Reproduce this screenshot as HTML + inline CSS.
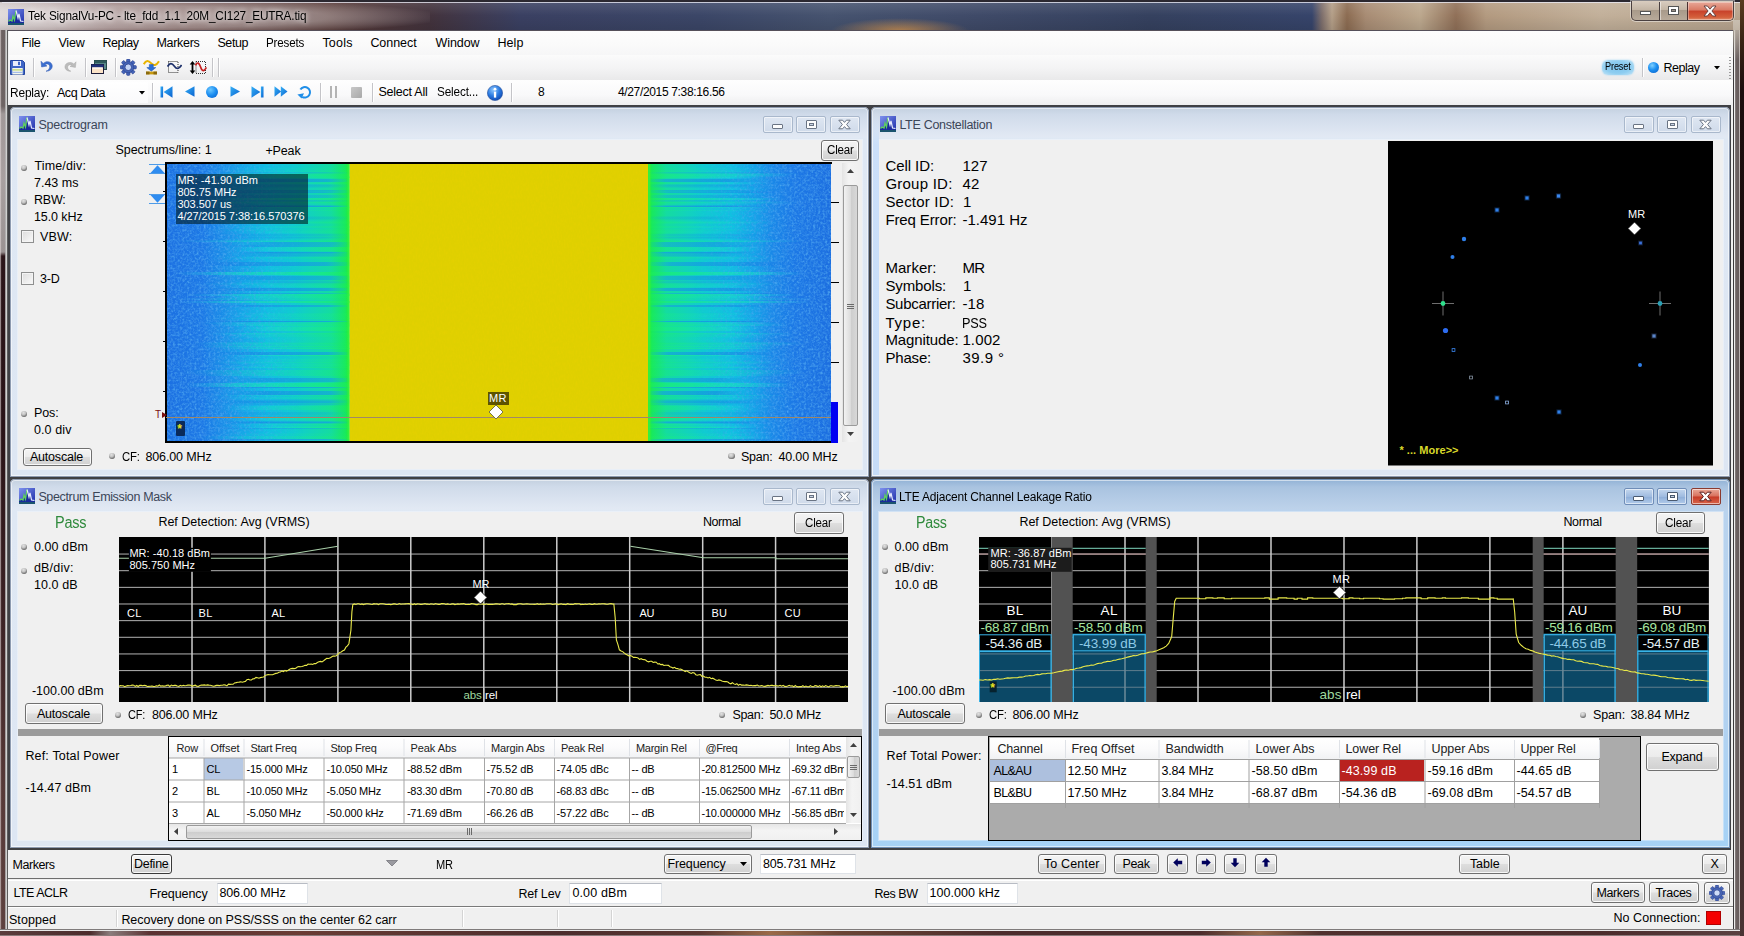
<!DOCTYPE html>
<html lang="en"><head><meta charset="utf-8"><title>Tek SignalVu-PC</title>
<style>

html,body{margin:0;padding:0}
body{width:1744px;height:936px;overflow:hidden;position:relative;background:#5c4848;font-family:"Liberation Sans",sans-serif;font-size:12px;color:#000}
div,span,svg{box-sizing:border-box}
.t{position:absolute;white-space:pre}
.a{position:absolute}
.btn{position:absolute;border:1px solid #707070;border-radius:3px;background:linear-gradient(#f4f4f4 0%,#ececec 48%,#dedede 52%,#d0d0d0 100%);box-shadow:inset 0 0 0 1px rgba(255,255,255,.85)}
.fld{position:absolute;background:#fff;border:1px solid #dfe3e8;border-top-color:#b8bcc4}
.knob{position:absolute;width:6.4px;height:6.4px;border-radius:50%;background:radial-gradient(circle at 42% 30%,#e2e2e2 0%,#c2c2c2 38%,#565656 82%,#2c2c2c 100%)}
.chk{position:absolute;width:13px;height:13px;border:1px solid #8e8f8f;background:linear-gradient(135deg,#dcdcdc,#fafafa);box-shadow:inset 0 0 0 1px #f4f4f4}
.pb{position:absolute;height:16.5px;border:1px solid #a9b8cc;border-radius:2px;background:linear-gradient(#dfe7f2,#cfdaea);box-shadow:inset 0 0 0 1px rgba(255,255,255,.55)}
.sep{position:absolute;width:1px;background:#c4c4c8;box-shadow:1px 0 0 #fff}
.glow{text-shadow:0 0 5px rgba(255,255,255,.9),0 0 8px rgba(255,255,255,.7)}

</style></head>
<body>
<div class="a" style="left:0;top:0;width:1744px;height:31px;background:linear-gradient(90deg,#cfc6c6 0px,#b9a8a8 50px,#8a6d6c 110px,#6b4a47 180px,#573a38 330px,#43333d 430px,#3a4062 520px,#3b4667 700px,#46536f 830px,#404b69 960px,#35415f 1150px,#36446a 1312px,#7e6f6c 1322px,#b49f88 1332px,#8c6c52 1347px,#a88c74 1366px,#bca88e 1420px,#907058 1456px,#b39a80 1486px,#c2b09a 1600px,#b7a48e 1744px)"></div>
<div class="a" style="left:830px;top:18px;width:140px;height:13px;background:radial-gradient(ellipse at 50% 100%,rgba(214,150,80,.85),rgba(214,150,80,0) 70%)"></div>
<div class="a" style="left:0;top:0;width:1744px;height:2px;background:#2b2830"></div>
<div class="a" style="left:2px;top:2px;width:1738px;height:1px;background:rgba(235,235,245,.8)"></div>
<div class="a" style="left:0;top:3px;width:1744px;height:28px;background:linear-gradient(rgba(255,255,255,.10),rgba(255,255,255,0) 45%,rgba(0,0,0,.10))"></div>
<div class="a" style="left:-40px;top:0px;width:470px;height:34px;background:radial-gradient(ellipse at 40% 50%,rgba(255,255,255,.50) 0%,rgba(255,255,255,.34) 45%,rgba(255,255,255,0) 75%)"></div>
<div class="a" style="left:1740px;top:0;width:4px;height:936px;background:linear-gradient(#5a3c20 0,#3a2414 40px,#1c0e0e 90px,#1a0c0c 50%,#3a2626 80%,#4a3434 100%)"></div>
<div class="a" style="left:0;top:30px;width:8px;height:906px;background:linear-gradient(#6c6262 0px,#6e6464 76px,#a09898 84px,#a8a0a0 150px,#9a9292 222px,#2c161a 226px,#2a1418 400px,#3e2426 600px,#573a38 760px,#5e4240 906px)"></div>
<div class="a" style="left:0;top:30px;width:8px;height:906px;background:linear-gradient(90deg,rgba(225,215,215,.85) 0,rgba(225,215,215,0) 1.6px,rgba(0,0,0,0) 5px,#b4b4b4 5.6px,#d4d4d4 6.6px,#5c5c5c 7.2px,#5c5c5c 8px)"></div>
<div class="a" style="left:1731px;top:30px;width:3px;height:899px;background:#fdfdfd"></div>
<div class="a" style="left:1733px;top:30px;width:7px;height:902px;background:linear-gradient(90deg,#3c3a3c 0,#3c3a3c 1px,#f0f0f0 1.4px,#e0e0e0 2px,#6e6464 2.6px,#665c5c 6.2px,#d8d0d0 6.6px,#d8d0d0 7px)"></div>
<div class="a" style="left:1733px;top:20px;width:7px;height:40px;background:linear-gradient(rgba(200,190,176,1),rgba(200,190,176,0))"></div>
<div class="a" style="left:0;top:929px;width:1740px;height:7px;background:linear-gradient(#4a4444 0,#e8e8e8 1.5px,#665252 2.5px,#5e4a4a 6px,#b8aaaa 7px)"></div>
<div class="a" style="left:0;top:931px;width:1740px;height:4px;background:linear-gradient(90deg,#5a3c3c 0px,#4c2c2c 90px,#8a7c7c 110px,#5a3232 150px,#6a3c34 300px,#4c2c2c 560px,#5a3630 700px,#9a6a48 770px,#6a4434 840px,#4c2c2c 1000px,#4c2c2c 1200px,#94684a 1260px,#50302e 1320px,#4c2c2c 1600px,#5a4040 1740px)"></div>
<svg class="a" style="left:8px;top:9px" width="16" height="16" viewBox="0 0 16 16"><defs><linearGradient id="ig1" x1="0" y1="0" x2="1" y2="1"><stop offset="0" stop-color="#7f92ee"/><stop offset="1" stop-color="#1b2ba8"/></linearGradient></defs><rect x="0" y="0" width="16" height="16" fill="url(#ig1)"/><path d="M0 16 L0 12 L2 11 L4 12 L5 7 L6.5 11 L8 1 L10 9 L11 5 L12.5 12 L16 12.5 L16 16Z" fill="#1a2a9c"/><path d="M0.5 12.5 L2 11 L4 12 L5 7 L6.5 11 L8 1.5" fill="none" stroke="#5fd060" stroke-width="1.3"/><path d="M8 1.5 L10 9 L11 5 L12.5 12 L15.5 12.5" fill="none" stroke="#e8ecff" stroke-width="1.2"/><path d="M0 15 L16 15" stroke="#1e7a46" stroke-width="1.5" opacity=".7"/></svg>
<span class="t glow" style="left:28.4px;top:8px;font-size:12.5px;line-height:16px;letter-spacing:-0.186px;transform:scaleX(0.942);transform-origin:0 50%;">Tek SignalVu-PC - lte_fdd_1.1_20M_CI127_EUTRA.tiq</span>
<div class="a" style="left:1631px;top:1px;width:103px;height:20px;border:1px solid #4a4040;border-top:none;border-radius:0 0 5px 5px;background:linear-gradient(#d9cdc0 0%,#c4b6a6 45%,#a89a8a 50%,#b8aa9a 100%);box-shadow:0 0 0 1px rgba(255,255,255,.45)"></div>
<div class="a" style="left:1659px;top:2px;width:1px;height:18px;background:#4a4040;box-shadow:1px 0 0 rgba(255,255,255,.5)"></div>
<div class="a" style="left:1687px;top:2px;width:46px;height:18px;border-left:1px solid #4a3030;border-radius:0 0 4px 0;background:linear-gradient(#e8a898 0%,#d97a64 45%,#c8412a 50%,#d4603c 85%,#e09070 100%);box-shadow:inset 0 0 0 1px rgba(255,255,255,.35)"></div>
<div class="a" style="left:1640px;top:11px;width:11px;height:4px;background:#fff;border:1px solid #555"></div>
<div class="a" style="left:1668px;top:6px;width:11px;height:9px;background:#fff;border:1px solid #555"></div>
<div class="a" style="left:1671px;top:9px;width:5px;height:3px;background:#9a8f86;border:1px solid #555"></div>
<svg class="a" style="left:1703px;top:5px" width="14" height="12" viewBox="0 0 14 12"><path d="M1 1h3.4L7 4.2 9.6 1H13L8.9 6 13 11H9.6L7 7.8 4.4 11H1L5.1 6Z" fill="#fff" stroke="#5a3a3a" stroke-width=".9"/></svg>
<div class="a" style="left:8px;top:30px;width:1725px;height:899px;background:#f0f0f0"></div>
<div class="a" style="left:8px;top:30px;width:1725px;height:1px;background:#55505a"></div>
<div class="a" style="left:9px;top:31px;width:1724px;height:24px;background:linear-gradient(#fdfdfd,#fafafa 60%,#f6f6f7)"></div>
<div class="a" style="left:9px;top:55px;width:1724px;height:25px;background:linear-gradient(#fbfbfb,#f3f3f4 55%,#e9e9ea)"></div>
<div class="a" style="left:9px;top:80px;width:1724px;height:25px;background:linear-gradient(#fefefe,#f9f9fa 60%,#eeeeef)"></div>
<span class="t" style="left:21.4px;top:35px;font-size:12.5px;line-height:16px;letter-spacing:-0.239px;">File</span>
<span class="t" style="left:58.4px;top:35px;font-size:12.5px;line-height:16px;letter-spacing:-0.169px;">View</span>
<span class="t" style="left:102.4px;top:35px;font-size:12.5px;line-height:16px;letter-spacing:-0.454px;">Replay</span>
<span class="t" style="left:156.4px;top:35px;font-size:12.5px;line-height:16px;letter-spacing:-0.279px;">Markers</span>
<span class="t" style="left:217.4px;top:35px;font-size:12.5px;line-height:16px;letter-spacing:-0.394px;">Setup</span>
<span class="t" style="left:266.4px;top:35px;font-size:12.5px;line-height:16px;letter-spacing:-0.182px;transform:scaleX(0.929);transform-origin:0 50%;">Presets</span>
<span class="t" style="left:322.4px;top:35px;font-size:12.5px;line-height:16px;letter-spacing:0.202px;">Tools</span>
<span class="t" style="left:370.4px;top:35px;font-size:12.5px;line-height:16px;letter-spacing:-0.052px;">Connect</span>
<span class="t" style="left:435.4px;top:35px;font-size:12.5px;line-height:16px;letter-spacing:-0.045px;">Window</span>
<span class="t" style="left:497.4px;top:35px;font-size:12.5px;line-height:16px;letter-spacing:0.120px;">Help</span>
<svg class="a" style="left:10px;top:59.5px" width="15" height="15" viewBox="0 0 15 15"><path d="M0.5 .5h12l2 2v12h-14z" fill="#3f66c6" stroke="#2446a0"/><rect x="3" y="1" width="8" height="5" fill="#e9eefb"/><rect x="8" y="1.7" width="2" height="3.4" fill="#3f66c6"/><rect x="2.3" y="8" width="10.4" height="6.5" fill="#f4f6ec"/><rect x="2.3" y="9.3" width="10.4" height="1.2" fill="#b9d46a"/><rect x="2.3" y="11.8" width="10.4" height="1.1" fill="#9db7e8"/></svg>
<svg class="a" style="left:40px;top:60px" width="13" height="12" viewBox="0 0 13 12"><path d="M1 1.2 L1.6 7 L7 6 L4.9 4.6 C7.5 2.8 10.2 4.6 9.6 7.4 C9.2 9.3 7.8 10.6 6 11.2 C10 11.4 12.6 8.6 12.2 5.6 C11.7 1.6 6.6 .2 3.2 3.4Z" fill="#3b6fd0" stroke="#2a55b0" stroke-width=".5"/></svg>
<svg class="a" style="left:63.5px;top:60.5px" width="13" height="11" viewBox="0 0 13 11"><path d="M12 .8 L11.4 6.4 L6 5.4 L8.1 4.2 C6 2.8 3.4 4.2 3.6 6.6 C3.8 8.4 5 9.6 6.8 10.2 C3 10.4 .6 8 1 5.2 C1.5 1.6 6.6 .2 9.8 3Z" fill="#bcbcbc" stroke="#a8a8a8" stroke-width=".5"/></svg>
<svg class="a" style="left:91px;top:60px" width="16" height="14" viewBox="0 0 16 14"><rect x="3.5" y=".5" width="12" height="9" fill="#5c8c8c" stroke="#274848"/><rect x="3.5" y=".5" width="12" height="2.6" fill="#2f5a5a"/><rect x=".5" y="4.5" width="12" height="9" fill="#fbe3c8" stroke="#1c1c3a"/><rect x=".5" y="4.5" width="12" height="2.8" fill="#1e2f78"/><rect x="1.5" y="7.6" width="10" height="1" fill="#fff"/></svg>
<svg class="a" style="left:120px;top:59px" width="16.5" height="16.5" viewBox="0 0 16 16"><g transform="translate(8 8)"><rect x="-1.7" y="-7.9" width="3.4" height="3.6" rx="1" transform="rotate(0)" fill="#4464b8" stroke="#2a3f8a" stroke-width=".5"/><rect x="-1.7" y="-7.9" width="3.4" height="3.6" rx="1" transform="rotate(45)" fill="#4464b8" stroke="#2a3f8a" stroke-width=".5"/><rect x="-1.7" y="-7.9" width="3.4" height="3.6" rx="1" transform="rotate(90)" fill="#4464b8" stroke="#2a3f8a" stroke-width=".5"/><rect x="-1.7" y="-7.9" width="3.4" height="3.6" rx="1" transform="rotate(135)" fill="#4464b8" stroke="#2a3f8a" stroke-width=".5"/><rect x="-1.7" y="-7.9" width="3.4" height="3.6" rx="1" transform="rotate(180)" fill="#4464b8" stroke="#2a3f8a" stroke-width=".5"/><rect x="-1.7" y="-7.9" width="3.4" height="3.6" rx="1" transform="rotate(225)" fill="#4464b8" stroke="#2a3f8a" stroke-width=".5"/><rect x="-1.7" y="-7.9" width="3.4" height="3.6" rx="1" transform="rotate(270)" fill="#4464b8" stroke="#2a3f8a" stroke-width=".5"/><rect x="-1.7" y="-7.9" width="3.4" height="3.6" rx="1" transform="rotate(315)" fill="#4464b8" stroke="#2a3f8a" stroke-width=".5"/><circle r="5.4" fill="#4464b8" stroke="#2a3f8a" stroke-width=".6"/><circle r="3.2" fill="#c4d4f6" stroke="#2a3f8a" stroke-width=".8"/></g></svg>
<svg class="a" style="left:142.5px;top:59px" width="17" height="16" viewBox="0 0 17 16"><path d="M.8 5.2 C3 .8 5.6 1.4 8 4.2 C10.4 7 13.4 6.6 16 2.2" fill="none" stroke="#e8b400" stroke-width="2"/><path d="M6.3 5.6h4v3h2.5L8.3 12.2 3.8 8.6h2.5z" fill="#2a6fd6" stroke="#1c4fa8" stroke-width=".5"/><rect x="3" y="12.6" width="11" height="2.8" fill="#c89a10"/><rect x="3" y="12.6" width="3.5" height="2.8" fill="#8a6a10"/><rect x="10.5" y="12.6" width="3.5" height="2.8" fill="#8a6a10"/></svg>
<svg class="a" style="left:166.5px;top:60px" width="15" height="14" viewBox="0 0 15 14"><rect x="1.5" y="1.5" width="9.5" height="11" fill="none" stroke="#333" stroke-width="1" stroke-dasharray="1 1"/><path d="M.5 6.6 C2.8 2.4 5 3 7.4 6.2 C9.8 9.6 12 9 14.6 5" fill="none" stroke="#1c2f6a" stroke-width="1.7"/></svg>
<svg class="a" style="left:188.5px;top:59.5px" width="18" height="15" viewBox="0 0 18 15"><path d="M3.5 1 L6.3 4.4 H4.4 V10.6 H6.3 L3.5 14 L.7 10.6 H2.6 V4.4 H.7Z" fill="#000"/><rect x="7" y="1.5" width="9.5" height="12" fill="none" stroke="#333" stroke-width="1" stroke-dasharray="1 1"/><path d="M6.5 5.4 C8.4 1.2 10.2 3 11.6 7 C13 11.4 15 12 17.4 7.4" fill="none" stroke="#c42020" stroke-width="1.7"/></svg>
<div class="sep" style="left:33px;top:58px;height:19px"></div>
<div class="sep" style="left:85px;top:58px;height:19px"></div>
<div class="sep" style="left:114.5px;top:58px;height:19px"></div>
<div class="sep" style="left:212px;top:58px;height:19px"></div>
<div class="sep" style="left:218px;top:58px;height:19px"></div>
<div class="a" style="left:1602px;top:59.5px;width:32px;height:15px;border-radius:6px;background:radial-gradient(ellipse at center,#7cc4ee 0%,#8ecdf0 55%,#c6e6f8 100%);box-shadow:0 0 2px #9fd4f2"></div>
<span class="t" style="left:1605.4px;top:60px;font-size:10px;line-height:13px;letter-spacing:-0.145px;transform:scaleX(0.917);transform-origin:0 50%;">Preset</span>
<div class="sep" style="left:1642px;top:58px;height:19px"></div>
<div class="a" style="left:1647.5px;top:61.5px;width:11px;height:11px;border-radius:50%;background:radial-gradient(circle at 38% 32%,#7fd0ff 0%,#1b8ff0 45%,#0c5fc8 100%)"></div>
<span class="t" style="left:1663.4px;top:59.5px;font-size:12.5px;line-height:16px;letter-spacing:-0.454px;">Replay</span>
<svg class="a" style="left:1713.5px;top:66px" width="6" height="3.5" viewBox="0 0 6 3.5"><path d="M0 0h6L3 3.5z" fill="#000"/></svg>
<div class="a" style="left:1729px;top:57px;width:2px;height:22px;background:repeating-linear-gradient(#9a9a9a 0 1px,transparent 1px 3px)"></div>
<span class="t" style="left:9.9px;top:84.5px;font-size:12.5px;line-height:16px;letter-spacing:-0.182px;transform:scaleX(0.953);transform-origin:0 50%;">Replay:</span>
<div class="a" style="left:50px;top:82px;width:98px;height:21px;background:linear-gradient(#fff,#fafafb)"></div>
<span class="t" style="left:56.9px;top:84.5px;font-size:12.5px;line-height:16px;letter-spacing:-0.403px;">Acq Data</span>
<svg class="a" style="left:139px;top:91px" width="6" height="3.5" viewBox="0 0 6 3.5"><path d="M0 0h6L3 3.5z" fill="#000"/></svg>
<div class="sep" style="left:152px;top:83px;height:19px"></div>
<svg class="a" style="left:160px;top:85.5px" width="13" height="12" viewBox="0 0 13 12"><defs><linearGradient id="ng" x1="0" y1="0" x2="1" y2="1"><stop offset="0" stop-color="#35b0f6"/><stop offset="1" stop-color="#0a62d0"/></linearGradient></defs><rect x=".5" y=".5" width="2.6" height="11" fill="url(#ng)"/><path d="M12.5 .3v11.4L3.6 6z" fill="url(#ng)"/></svg>
<svg class="a" style="left:184px;top:86px" width="11" height="11" viewBox="0 0 11 11"><path d="M10.5 .3v10.4L1 5.5z" fill="url(#ng)"/></svg>
<div class="a" style="left:205.5px;top:86px;width:12px;height:12px;border-radius:50%;background:radial-gradient(circle at 38% 32%,#6cc8ff 0%,#1a8cf0 50%,#0a5cc8 100%)"></div>
<svg class="a" style="left:230px;top:86px" width="11" height="11" viewBox="0 0 11 11"><path d="M.5 .3v10.4L10 5.5z" fill="url(#ng)"/></svg>
<svg class="a" style="left:250.5px;top:85.5px" width="13" height="12" viewBox="0 0 13 12"><rect x="9.9" y=".5" width="2.6" height="11" fill="url(#ng)"/><path d="M.5 .3v11.4L9.4 6z" fill="url(#ng)"/></svg>
<svg class="a" style="left:274px;top:86px" width="14" height="11" viewBox="0 0 14 11"><path d="M.5 .3v10.4L7.2 5.5z" fill="url(#ng)"/><path d="M6.8 .3v10.4L13.5 5.5z" fill="url(#ng)"/></svg>
<svg class="a" style="left:297px;top:85px" width="15" height="14" viewBox="0 0 15 14"><path d="M3.4 4.6 A5.2 5.2 0 1 1 5.2 11.8" fill="none" stroke="#1f8ee8" stroke-width="2"/><path d="M.4 9.4 L7 8.2 L4.6 13.6Z" fill="#1f8ee8"/></svg>
<div class="sep" style="left:319.5px;top:83px;height:19px"></div>
<div class="a" style="left:330px;top:86px;width:2px;height:12px;background:#b4b4b4"></div><div class="a" style="left:334.5px;top:86px;width:2px;height:12px;background:#b4b4b4"></div>
<div class="a" style="left:350.5px;top:87px;width:11px;height:11px;background:linear-gradient(135deg,#c8c8c8,#a8a8a8);border-radius:1px"></div>
<div class="sep" style="left:372px;top:83px;height:19px"></div>
<span class="t" style="left:378.4px;top:84px;font-size:12.5px;line-height:16px;letter-spacing:-0.222px;">Select All</span>
<span class="t" style="left:437.4px;top:84px;font-size:12.5px;line-height:16px;letter-spacing:-0.151px;transform:scaleX(0.940);transform-origin:0 50%;">Select...</span>
<svg class="a" style="left:487px;top:84.5px" width="16" height="16" viewBox="0 0 16 16"><defs><radialGradient id="inf" cx=".4" cy=".3" r=".8"><stop offset="0" stop-color="#8fc8ff"/><stop offset=".5" stop-color="#2a7ae0"/><stop offset="1" stop-color="#0a3fa8"/></radialGradient></defs><circle cx="8" cy="8" r="7.6" fill="url(#inf)" stroke="#27509c" stroke-width=".6"/><rect x="6.9" y="6.6" width="2.3" height="6" fill="#fff"/><circle cx="8" cy="4.2" r="1.4" fill="#fff"/></svg>
<div class="sep" style="left:510.5px;top:83px;height:19px"></div>
<span class="t" style="left:537.9px;top:84px;font-size:12px;line-height:16px;">8</span>
<span class="t" style="left:617.9px;top:84px;font-size:12px;line-height:16px;letter-spacing:-0.337px;">4/27/2015 7:38:16.56</span>
<div class="a" style="left:8px;top:105px;width:1723px;height:745px;background:#3f4044"></div>
<div class="a" style="left:10px;top:107px;width:859px;height:370px;background:linear-gradient(#c3cfde 0px,#d0dbea 8px,#e2e9f4 30px,#dfe8f4 32px,#dde6f3 100%);border-radius:5px 5px 0 0;box-shadow:inset 0 0 0 1px #8e9bb0,inset 0 0 0 2px rgba(255,255,255,.55)"></div>
<div class="a" style="left:17.5px;top:139.6px;width:844px;height:329.9px;background:#f0f0f0;box-shadow:0 0 0 1px rgba(255,255,255,.35)"></div>
<svg class="a" style="left:19px;top:116.2px" width="16" height="16" viewBox="0 0 16 16"><defs><linearGradient id="ig2" x1="0" y1="0" x2="1" y2="1"><stop offset="0" stop-color="#7f92ee"/><stop offset="1" stop-color="#1b2ba8"/></linearGradient></defs><rect x="0" y="0" width="16" height="16" fill="url(#ig2)"/><path d="M0 16 L0 12 L2 11 L4 12 L5 7 L6.5 11 L8 1 L10 9 L11 5 L12.5 12 L16 12.5 L16 16Z" fill="#1a2a9c"/><path d="M0.5 12.5 L2 11 L4 12 L5 7 L6.5 11 L8 1.5" fill="none" stroke="#5fd060" stroke-width="1.3"/><path d="M8 1.5 L10 9 L11 5 L12.5 12 L15.5 12.5" fill="none" stroke="#e8ecff" stroke-width="1.2"/><path d="M0 15 L16 15" stroke="#1e7a46" stroke-width="1.5" opacity=".7"/></svg>
<span class="t" style="left:38.4px;top:117.4px;font-size:12.5px;line-height:16px;letter-spacing:-0.215px;color:#3b4658;">Spectrogram</span>
<div class="pb" style="left:762.5px;top:116px;width:30px"></div>
<div class="pb" style="left:796px;top:116px;width:30px"></div>
<div class="pb" style="left:829.5px;top:116px;width:30px"></div>
<div class="a" style="left:772px;top:123.5px;width:11px;height:5px;background:#fdfdfd;border:1px solid #6a7484;border-radius:1px"></div>
<div class="a" style="left:805.5px;top:119.5px;width:11px;height:9px;background:#fdfdfd;border:1px solid #6a7484;border-radius:1px"></div>
<div class="a" style="left:808.5px;top:122.5px;width:5px;height:3px;background:#c9d4e4;border:1px solid #6a7484"></div>
<svg class="a" style="left:838px;top:119px" width="13" height="11" viewBox="0 0 13 11"><path d="M.8 1.2h3.8L6.5 3.4 8.4 1.2h3.8L8.6 5.5 12.2 9.8H8.4L6.5 7.6 4.6 9.8H.8L4.4 5.5Z" fill="#fdfdfd" stroke="#6a7484" stroke-width="1"/></svg>
<div class="a" style="left:871px;top:107px;width:859px;height:370px;background:linear-gradient(#c3cfde 0px,#d0dbea 8px,#e2e9f4 30px,#dfe8f4 32px,#dde6f3 100%);border-radius:5px 5px 0 0;box-shadow:inset 0 0 0 1px #8e9bb0,inset 0 0 0 2px rgba(255,255,255,.55)"></div>
<div class="a" style="left:878.5px;top:139.6px;width:844px;height:329.9px;background:#f0f0f0;box-shadow:0 0 0 1px rgba(255,255,255,.35)"></div>
<div class="a" style="left:872.5px;top:115px;width:6px;height:360px;background:linear-gradient(rgba(200,222,250,0),#cbdff9 30px,#c6dcf8)"></div>
<svg class="a" style="left:880px;top:116.2px" width="16" height="16" viewBox="0 0 16 16"><defs><linearGradient id="ig3" x1="0" y1="0" x2="1" y2="1"><stop offset="0" stop-color="#7f92ee"/><stop offset="1" stop-color="#1b2ba8"/></linearGradient></defs><rect x="0" y="0" width="16" height="16" fill="url(#ig3)"/><path d="M0 16 L0 12 L2 11 L4 12 L5 7 L6.5 11 L8 1 L10 9 L11 5 L12.5 12 L16 12.5 L16 16Z" fill="#1a2a9c"/><path d="M0.5 12.5 L2 11 L4 12 L5 7 L6.5 11 L8 1.5" fill="none" stroke="#5fd060" stroke-width="1.3"/><path d="M8 1.5 L10 9 L11 5 L12.5 12 L15.5 12.5" fill="none" stroke="#e8ecff" stroke-width="1.2"/><path d="M0 15 L16 15" stroke="#1e7a46" stroke-width="1.5" opacity=".7"/></svg>
<span class="t" style="left:899.4px;top:117.4px;font-size:12.5px;line-height:16px;letter-spacing:-0.297px;color:#3b4658;">LTE Constellation</span>
<div class="pb" style="left:1623.5px;top:116px;width:30px"></div>
<div class="pb" style="left:1657px;top:116px;width:30px"></div>
<div class="pb" style="left:1690.5px;top:116px;width:30px"></div>
<div class="a" style="left:1633px;top:123.5px;width:11px;height:5px;background:#fdfdfd;border:1px solid #6a7484;border-radius:1px"></div>
<div class="a" style="left:1666.5px;top:119.5px;width:11px;height:9px;background:#fdfdfd;border:1px solid #6a7484;border-radius:1px"></div>
<div class="a" style="left:1669.5px;top:122.5px;width:5px;height:3px;background:#c9d4e4;border:1px solid #6a7484"></div>
<svg class="a" style="left:1699px;top:119px" width="13" height="11" viewBox="0 0 13 11"><path d="M.8 1.2h3.8L6.5 3.4 8.4 1.2h3.8L8.6 5.5 12.2 9.8H8.4L6.5 7.6 4.6 9.8H.8L4.4 5.5Z" fill="#fdfdfd" stroke="#6a7484" stroke-width="1"/></svg>
<div class="a" style="left:10px;top:479px;width:859px;height:369px;background:linear-gradient(#c3cfde 0px,#d0dbea 8px,#e2e9f4 30px,#dfe8f4 32px,#dde6f3 100%);border-radius:5px 5px 0 0;box-shadow:inset 0 0 0 1px #8e9bb0,inset 0 0 0 2px rgba(255,255,255,.55)"></div>
<div class="a" style="left:17.5px;top:511.6px;width:844px;height:328.9px;background:#f0f0f0;box-shadow:0 0 0 1px rgba(255,255,255,.35)"></div>
<svg class="a" style="left:19px;top:488.2px" width="16" height="16" viewBox="0 0 16 16"><defs><linearGradient id="ig4" x1="0" y1="0" x2="1" y2="1"><stop offset="0" stop-color="#7f92ee"/><stop offset="1" stop-color="#1b2ba8"/></linearGradient></defs><rect x="0" y="0" width="16" height="16" fill="url(#ig4)"/><path d="M0 16 L0 12 L2 11 L4 12 L5 7 L6.5 11 L8 1 L10 9 L11 5 L12.5 12 L16 12.5 L16 16Z" fill="#1a2a9c"/><path d="M0.5 12.5 L2 11 L4 12 L5 7 L6.5 11 L8 1.5" fill="none" stroke="#5fd060" stroke-width="1.3"/><path d="M8 1.5 L10 9 L11 5 L12.5 12 L15.5 12.5" fill="none" stroke="#e8ecff" stroke-width="1.2"/><path d="M0 15 L16 15" stroke="#1e7a46" stroke-width="1.5" opacity=".7"/></svg>
<span class="t" style="left:38.4px;top:489.4px;font-size:12.5px;line-height:16px;letter-spacing:-0.355px;color:#3b4658;">Spectrum Emission Mask</span>
<div class="pb" style="left:762.5px;top:488px;width:30px"></div>
<div class="pb" style="left:796px;top:488px;width:30px"></div>
<div class="pb" style="left:829.5px;top:488px;width:30px"></div>
<div class="a" style="left:772px;top:495.5px;width:11px;height:5px;background:#fdfdfd;border:1px solid #6a7484;border-radius:1px"></div>
<div class="a" style="left:805.5px;top:491.5px;width:11px;height:9px;background:#fdfdfd;border:1px solid #6a7484;border-radius:1px"></div>
<div class="a" style="left:808.5px;top:494.5px;width:5px;height:3px;background:#c9d4e4;border:1px solid #6a7484"></div>
<svg class="a" style="left:838px;top:491px" width="13" height="11" viewBox="0 0 13 11"><path d="M.8 1.2h3.8L6.5 3.4 8.4 1.2h3.8L8.6 5.5 12.2 9.8H8.4L6.5 7.6 4.6 9.8H.8L4.4 5.5Z" fill="#fdfdfd" stroke="#6a7484" stroke-width="1"/></svg>
<div class="a" style="left:871px;top:479px;width:859px;height:369px;background:linear-gradient(#8fb0d4 0px,#a9c3e0 8px,#bdd2ea 30px,#b9d3ee 32px,#b4d2f0 60%,#a6d2f6 100%);border-radius:5px 5px 0 0;box-shadow:inset 0 0 0 1px #6f8fb5,inset 0 0 0 2px rgba(255,255,255,.55)"></div>
<div class="a" style="left:878.5px;top:511.6px;width:844px;height:328.9px;background:#f0f0f0;box-shadow:0 0 0 1px rgba(255,255,255,.35)"></div>
<svg class="a" style="left:880px;top:488.2px" width="16" height="16" viewBox="0 0 16 16"><defs><linearGradient id="ig5" x1="0" y1="0" x2="1" y2="1"><stop offset="0" stop-color="#7f92ee"/><stop offset="1" stop-color="#1b2ba8"/></linearGradient></defs><rect x="0" y="0" width="16" height="16" fill="url(#ig5)"/><path d="M0 16 L0 12 L2 11 L4 12 L5 7 L6.5 11 L8 1 L10 9 L11 5 L12.5 12 L16 12.5 L16 16Z" fill="#1a2a9c"/><path d="M0.5 12.5 L2 11 L4 12 L5 7 L6.5 11 L8 1.5" fill="none" stroke="#5fd060" stroke-width="1.3"/><path d="M8 1.5 L10 9 L11 5 L12.5 12 L15.5 12.5" fill="none" stroke="#e8ecff" stroke-width="1.2"/><path d="M0 15 L16 15" stroke="#1e7a46" stroke-width="1.5" opacity=".7"/></svg>
<span class="t" style="left:899.4px;top:489.4px;font-size:12.5px;line-height:16px;letter-spacing:-0.183px;transform:scaleX(0.957);transform-origin:0 50%;">LTE Adjacent Channel Leakage Ratio</span>
<div class="pb" style="left:1623.5px;top:488px;width:30px;background:linear-gradient(#c4d7ee,#9fbbe0 50%,#8eaed8 52%,#b2cbea);border-color:#6f8db8"></div>
<div class="pb" style="left:1657px;top:488px;width:30px;background:linear-gradient(#c4d7ee,#9fbbe0 50%,#8eaed8 52%,#b2cbea);border-color:#6f8db8"></div>
<div class="pb" style="left:1690.5px;top:488px;width:30px;background:linear-gradient(#e9a898,#d8705c 48%,#c63a26 52%,#d8644a);border-color:#8a3a30"></div>
<div class="a" style="left:1633px;top:495.5px;width:11px;height:5px;background:#fff;border:1px solid #4a5a70;border-radius:1px"></div>
<div class="a" style="left:1666.5px;top:491.5px;width:11px;height:9px;background:#fff;border:1px solid #4a5a70;border-radius:1px"></div>
<div class="a" style="left:1669.5px;top:494.5px;width:5px;height:3px;background:#c9d4e4;border:1px solid #4a5a70"></div>
<svg class="a" style="left:1699px;top:491px" width="13" height="11" viewBox="0 0 13 11"><path d="M.8 1.2h3.8L6.5 3.4 8.4 1.2h3.8L8.6 5.5 12.2 9.8H8.4L6.5 7.6 4.6 9.8H.8L4.4 5.5Z" fill="#fff" stroke="#5a2020" stroke-width="1"/></svg>
<span class="t" style="left:115.4px;top:142px;font-size:12.5px;line-height:16px;letter-spacing:-0.022px;">Spectrums/line: 1</span>
<span class="t" style="left:265.4px;top:142.5px;font-size:12.5px;line-height:16px;letter-spacing:-0.119px;">+Peak</span>
<div class="btn" style="left:821px;top:139.5px;width:38px;height:21px;"></div>
<span class="t" style="left:826.9px;top:142.3px;font-size:12.5px;line-height:16px;letter-spacing:-0.179px;transform:scaleX(0.921);transform-origin:0 50%;">Clear</span>
<div class="knob" style="left:20.8px;top:165px"></div>
<span class="t" style="left:34.4px;top:158px;font-size:12.5px;line-height:16px;letter-spacing:0.161px;">Time/div:</span>
<span class="t" style="left:33.9px;top:175px;font-size:12.5px;line-height:16px;letter-spacing:0.033px;">7.43 ms</span>
<div class="knob" style="left:20.8px;top:199px"></div>
<span class="t" style="left:33.9px;top:192px;font-size:12.5px;line-height:16px;letter-spacing:-0.180px;">RBW:</span>
<span class="t" style="left:33.9px;top:209px;font-size:12.5px;line-height:16px;letter-spacing:-0.080px;">15.0 kHz</span>
<div class="chk" style="left:21px;top:230px"></div>
<span class="t" style="left:39.9px;top:228.5px;font-size:12.5px;line-height:16px;letter-spacing:0.241px;">VBW:</span>
<div class="chk" style="left:21px;top:272px"></div>
<span class="t" style="left:39.9px;top:270.5px;font-size:12.5px;line-height:16px;letter-spacing:-0.152px;">3-D</span>
<div class="knob" style="left:20.8px;top:411px"></div>
<span class="t" style="left:33.9px;top:405px;font-size:12.5px;line-height:16px;letter-spacing:-0.079px;">Pos:</span>
<span class="t" style="left:33.9px;top:422px;font-size:12.5px;line-height:16px;letter-spacing:0.122px;">0.0 div</span>
<svg class="a" style="left:149px;top:164px" width="17" height="10" viewBox="0 0 17 10"><path d="M0 .5H17M0 9.5H17" stroke="#4d9be8" stroke-width="1"/><path d="M8.5 1.2 L15.5 9 H1.5Z" fill="#2f8cf0"/></svg>
<svg class="a" style="left:149px;top:194px" width="17" height="10" viewBox="0 0 17 10"><path d="M0 .5H17M0 9.5H17" stroke="#4d9be8" stroke-width="1"/><path d="M8.5 8.8 L15.5 1 H1.5Z" fill="#2f8cf0"/></svg>
<svg class="a" style="left:166px;top:163px" width="665" height="279" viewBox="0 0 665 279"><defs><linearGradient id="sl" x1="0" x2="1"><stop offset="0" stop-color="#1c70e2"/><stop offset=".2" stop-color="#1c78e6"/><stop offset=".3" stop-color="#1a8ce8"/><stop offset=".42" stop-color="#14a8e8"/><stop offset=".55" stop-color="#10c0e2"/><stop offset=".7" stop-color="#10ccd0"/><stop offset=".9" stop-color="#14dca0"/><stop offset=".975" stop-color="#18e860"/><stop offset="1" stop-color="#20f030"/></linearGradient><linearGradient id="sr" x1="0" x2="1"><stop offset="0" stop-color="#20f030"/><stop offset=".025" stop-color="#18e860"/><stop offset=".1" stop-color="#14dca0"/><stop offset=".3" stop-color="#10ccd0"/><stop offset=".46" stop-color="#10c0e2"/><stop offset=".58" stop-color="#14a4e8"/><stop offset=".68" stop-color="#1a88e8"/><stop offset=".8" stop-color="#1c78e6"/><stop offset="1" stop-color="#1c6ee0"/></linearGradient><linearGradient id="la" x1="0" x2="1"><stop offset="0" stop-color="#14d8e0" stop-opacity="0"/><stop offset=".3" stop-color="#18e4c0" stop-opacity=".6"/><stop offset=".85" stop-color="#18ec80" stop-opacity=".95"/><stop offset="1" stop-color="#20f050" stop-opacity=".4"/></linearGradient><linearGradient id="lb" x1="0" x2="1"><stop offset="0" stop-color="#1870e4" stop-opacity="0"/><stop offset=".3" stop-color="#187ce6" stop-opacity=".7"/><stop offset=".85" stop-color="#149ce8" stop-opacity=".85"/><stop offset="1" stop-color="#12a8d8" stop-opacity=".1"/></linearGradient><linearGradient id="ra" x1="1" x2="0"><stop offset="0" stop-color="#14d8e0" stop-opacity="0"/><stop offset=".3" stop-color="#18e4c0" stop-opacity=".6"/><stop offset=".85" stop-color="#18ec80" stop-opacity=".95"/><stop offset="1" stop-color="#20f050" stop-opacity=".4"/></linearGradient><linearGradient id="rb" x1="1" x2="0"><stop offset="0" stop-color="#1870e4" stop-opacity="0"/><stop offset=".3" stop-color="#187ce6" stop-opacity=".7"/><stop offset=".85" stop-color="#149ce8" stop-opacity=".85"/><stop offset="1" stop-color="#12a8d8" stop-opacity=".1"/></linearGradient><filter id="nz" x="0" y="0" width="100%" height="100%"><feTurbulence type="fractalNoise" baseFrequency=".42" numOctaves="2" seed="3"/><feColorMatrix values="0 0 0 0 .06  0 0 0 0 .32  0 0 0 0 .82  2.6 0 0 0 -1.15"/></filter><filter id="nl" x="0" y="0" width="100%" height="100%"><feTurbulence type="fractalNoise" baseFrequency=".42" numOctaves="2" seed="11"/><feColorMatrix values="0 0 0 0 .16  0 0 0 0 .58  0 0 0 0 .98  0 2.6 0 0 -1.2"/></filter><filter id="ny" x="0" y="0" width="100%" height="100%"><feTurbulence type="fractalNoise" baseFrequency=".6 .25" numOctaves="2" seed="8"/><feColorMatrix values="0 0 0 0 .95  0 0 0 0 .65  0 0 0 0 0  .8 .5 0 0 -.55"/></filter><linearGradient id="fl" x1="0" x2="1"><stop offset="0" stop-color="#fff"/><stop offset=".3" stop-color="#fff"/><stop offset=".75" stop-color="#000"/></linearGradient><linearGradient id="fr" x1="1" x2="0"><stop offset="0" stop-color="#fff"/><stop offset=".3" stop-color="#fff"/><stop offset=".75" stop-color="#000"/></linearGradient><mask id="mkl" maskUnits="userSpaceOnUse" x="0" y="0" width="183.5" height="279"><rect x="0" y="0" width="183.5" height="279" fill="url(#fl)"/></mask><mask id="mkr" maskUnits="userSpaceOnUse" x="482" y="0" width="183" height="279"><rect x="482" y="0" width="183" height="279" fill="url(#fr)"/></mask></defs><rect x="0" y="0" width="183.5" height="279" fill="url(#sl)"/><rect x="183.5" y="0" width="298.5" height="279" fill="#dfd000"/><rect x="482" y="0" width="183" height="279" fill="url(#sr)"/><rect x="46" y="5.5" width="137" height="1" fill="url(#la)" opacity="0.28"/><rect x="482" y="5.5" width="141" height="1" fill="url(#ra)" opacity="0.28"/><rect x="40" y="7.5" width="143" height="2" fill="url(#la)" opacity="0.3"/><rect x="482" y="7.5" width="120" height="2" fill="url(#ra)" opacity="0.3"/><rect x="14" y="9.5" width="170" height="1" fill="url(#lb)" opacity="0.6"/><rect x="482" y="9.5" width="153" height="1" fill="url(#rb)" opacity="0.6"/><rect x="30" y="10.5" width="153" height="1" fill="url(#la)" opacity="0.77"/><rect x="482" y="10.5" width="152" height="1" fill="url(#ra)" opacity="0.77"/><rect x="22" y="11.5" width="161" height="2" fill="url(#la)" opacity="0.74"/><rect x="482" y="11.5" width="145" height="2" fill="url(#ra)" opacity="0.74"/><rect x="51" y="13.5" width="133" height="1.5" fill="url(#la)" opacity="0.68"/><rect x="482" y="13.5" width="118" height="1.5" fill="url(#ra)" opacity="0.68"/><rect x="43" y="16.0" width="140" height="3" fill="url(#lb)" opacity="0.72"/><rect x="482" y="16.0" width="114" height="3" fill="url(#rb)" opacity="0.72"/><rect x="66" y="19.5" width="117" height="1.5" fill="url(#la)" opacity="0.36"/><rect x="482" y="19.5" width="122" height="1.5" fill="url(#ra)" opacity="0.36"/><rect x="42" y="21.5" width="141" height="2" fill="url(#lb)" opacity="0.46"/><rect x="482" y="21.5" width="126" height="2" fill="url(#rb)" opacity="0.46"/><rect x="34" y="23.5" width="149" height="1" fill="url(#lb)" opacity="0.35"/><rect x="482" y="23.5" width="122" height="1" fill="url(#rb)" opacity="0.35"/><rect x="52" y="27.0" width="132" height="1.5" fill="url(#lb)" opacity="0.61"/><rect x="482" y="27.0" width="122" height="1.5" fill="url(#rb)" opacity="0.61"/><rect x="14" y="28.5" width="170" height="1.5" fill="url(#lb)" opacity="0.65"/><rect x="482" y="28.5" width="149" height="1.5" fill="url(#rb)" opacity="0.65"/><rect x="37" y="32.0" width="146" height="3" fill="url(#lb)" opacity="0.42"/><rect x="482" y="32.0" width="128" height="3" fill="url(#rb)" opacity="0.42"/><rect x="45" y="35.0" width="138" height="2" fill="url(#la)" opacity="0.62"/><rect x="482" y="35.0" width="136" height="2" fill="url(#ra)" opacity="0.62"/><rect x="76" y="37.5" width="107" height="1" fill="url(#lb)" opacity="0.49"/><rect x="482" y="37.5" width="98" height="1" fill="url(#rb)" opacity="0.49"/><rect x="19" y="38.5" width="164" height="2" fill="url(#la)" opacity="0.42"/><rect x="482" y="38.5" width="153" height="2" fill="url(#ra)" opacity="0.42"/><rect x="59" y="42.5" width="124" height="1.5" fill="url(#lb)" opacity="0.84"/><rect x="482" y="42.5" width="118" height="1.5" fill="url(#rb)" opacity="0.84"/><rect x="58" y="44.0" width="126" height="1" fill="url(#la)" opacity="0.34"/><rect x="482" y="44.0" width="132" height="1" fill="url(#ra)" opacity="0.34"/><rect x="40" y="47.0" width="144" height="1" fill="url(#la)" opacity="0.25"/><rect x="482" y="47.0" width="136" height="1" fill="url(#ra)" opacity="0.25"/><rect x="75" y="53.5" width="108" height="3" fill="url(#lb)" opacity="0.28"/><rect x="482" y="53.5" width="90" height="3" fill="url(#rb)" opacity="0.28"/><rect x="45" y="58.5" width="139" height="2" fill="url(#la)" opacity="0.49"/><rect x="482" y="58.5" width="131" height="2" fill="url(#ra)" opacity="0.49"/><rect x="49" y="63.5" width="135" height="1" fill="url(#la)" opacity="0.59"/><rect x="482" y="63.5" width="109" height="1" fill="url(#ra)" opacity="0.59"/><rect x="37" y="66.5" width="147" height="1" fill="url(#la)" opacity="0.37"/><rect x="482" y="66.5" width="130" height="1" fill="url(#ra)" opacity="0.37"/><rect x="71" y="68.0" width="112" height="2" fill="url(#la)" opacity="0.32"/><rect x="482" y="68.0" width="86" height="2" fill="url(#ra)" opacity="0.32"/><rect x="17" y="71.0" width="167" height="2" fill="url(#lb)" opacity="0.3"/><rect x="482" y="71.0" width="158" height="2" fill="url(#rb)" opacity="0.3"/><rect x="11" y="73.5" width="173" height="2" fill="url(#lb)" opacity="0.35"/><rect x="482" y="73.5" width="143" height="2" fill="url(#rb)" opacity="0.35"/><rect x="11" y="77.5" width="172" height="1.5" fill="url(#la)" opacity="0.58"/><rect x="482" y="77.5" width="157" height="1.5" fill="url(#ra)" opacity="0.58"/><rect x="76" y="79.0" width="108" height="3" fill="url(#lb)" opacity="0.56"/><rect x="482" y="79.0" width="104" height="3" fill="url(#rb)" opacity="0.56"/><rect x="56" y="82.0" width="128" height="2" fill="url(#lb)" opacity="0.55"/><rect x="482" y="82.0" width="113" height="2" fill="url(#rb)" opacity="0.55"/><rect x="68" y="84.0" width="115" height="4" fill="url(#la)" opacity="0.49"/><rect x="482" y="84.0" width="116" height="4" fill="url(#ra)" opacity="0.49"/><rect x="67" y="89.0" width="116" height="1.5" fill="url(#lb)" opacity="0.84"/><rect x="482" y="89.0" width="108" height="1.5" fill="url(#rb)" opacity="0.84"/><rect x="69" y="90.5" width="115" height="3" fill="url(#lb)" opacity="0.46"/><rect x="482" y="90.5" width="98" height="3" fill="url(#rb)" opacity="0.46"/><rect x="44" y="94.0" width="140" height="1.5" fill="url(#la)" opacity="0.31"/><rect x="482" y="94.0" width="134" height="1.5" fill="url(#ra)" opacity="0.31"/><rect x="18" y="99.0" width="166" height="4" fill="url(#lb)" opacity="0.75"/><rect x="482" y="99.0" width="156" height="4" fill="url(#rb)" opacity="0.75"/><rect x="11" y="109.0" width="172" height="3" fill="url(#la)" opacity="0.85"/><rect x="482" y="109.0" width="155" height="3" fill="url(#ra)" opacity="0.85"/><rect x="53" y="113.0" width="131" height="4" fill="url(#lb)" opacity="0.62"/><rect x="482" y="113.0" width="121" height="4" fill="url(#rb)" opacity="0.62"/><rect x="10" y="117.5" width="173" height="1" fill="url(#lb)" opacity="0.33"/><rect x="482" y="117.5" width="143" height="1" fill="url(#rb)" opacity="0.33"/><rect x="82" y="118.5" width="102" height="2" fill="url(#lb)" opacity="0.33"/><rect x="482" y="118.5" width="104" height="2" fill="url(#rb)" opacity="0.33"/><rect x="27" y="120.5" width="157" height="1" fill="url(#la)" opacity="0.43"/><rect x="482" y="120.5" width="141" height="1" fill="url(#ra)" opacity="0.43"/><rect x="76" y="122.0" width="108" height="2" fill="url(#la)" opacity="0.33"/><rect x="482" y="122.0" width="104" height="2" fill="url(#ra)" opacity="0.33"/><rect x="40" y="125.0" width="143" height="3" fill="url(#lb)" opacity="0.79"/><rect x="482" y="125.0" width="118" height="3" fill="url(#rb)" opacity="0.79"/><rect x="11" y="130.0" width="173" height="1" fill="url(#lb)" opacity="0.56"/><rect x="482" y="130.0" width="161" height="1" fill="url(#rb)" opacity="0.56"/><rect x="22" y="131.0" width="162" height="2" fill="url(#la)" opacity="0.73"/><rect x="482" y="131.0" width="149" height="2" fill="url(#ra)" opacity="0.73"/><rect x="48" y="133.0" width="135" height="2" fill="url(#la)" opacity="0.66"/><rect x="482" y="133.0" width="125" height="2" fill="url(#ra)" opacity="0.66"/><rect x="12" y="135.0" width="171" height="2" fill="url(#la)" opacity="0.36"/><rect x="482" y="135.0" width="165" height="2" fill="url(#ra)" opacity="0.36"/><rect x="14" y="138.0" width="170" height="2" fill="url(#la)" opacity="0.79"/><rect x="482" y="138.0" width="162" height="2" fill="url(#ra)" opacity="0.79"/><rect x="42" y="142.0" width="141" height="2" fill="url(#lb)" opacity="0.67"/><rect x="482" y="142.0" width="128" height="2" fill="url(#rb)" opacity="0.67"/><rect x="58" y="150.5" width="125" height="1" fill="url(#la)" opacity="0.44"/><rect x="482" y="150.5" width="117" height="1" fill="url(#ra)" opacity="0.44"/><rect x="66" y="151.5" width="117" height="3" fill="url(#la)" opacity="0.32"/><rect x="482" y="151.5" width="93" height="3" fill="url(#ra)" opacity="0.32"/><rect x="44" y="155.0" width="140" height="1" fill="url(#la)" opacity="0.33"/><rect x="482" y="155.0" width="120" height="1" fill="url(#ra)" opacity="0.33"/><rect x="39" y="158.0" width="145" height="1" fill="url(#lb)" opacity="0.85"/><rect x="482" y="158.0" width="135" height="1" fill="url(#rb)" opacity="0.85"/><rect x="34" y="159.5" width="150" height="1.5" fill="url(#la)" opacity="0.47"/><rect x="482" y="159.5" width="139" height="1.5" fill="url(#ra)" opacity="0.47"/><rect x="47" y="161.0" width="137" height="2" fill="url(#la)" opacity="0.62"/><rect x="482" y="161.0" width="140" height="2" fill="url(#ra)" opacity="0.62"/><rect x="76" y="163.0" width="108" height="1" fill="url(#la)" opacity="0.41"/><rect x="482" y="163.0" width="110" height="1" fill="url(#ra)" opacity="0.41"/><rect x="69" y="164.0" width="114" height="4" fill="url(#la)" opacity="0.8"/><rect x="482" y="164.0" width="113" height="4" fill="url(#ra)" opacity="0.8"/><rect x="40" y="170.0" width="143" height="1.5" fill="url(#la)" opacity="0.66"/><rect x="482" y="170.0" width="146" height="1.5" fill="url(#ra)" opacity="0.66"/><rect x="54" y="171.5" width="130" height="3" fill="url(#la)" opacity="0.41"/><rect x="482" y="171.5" width="128" height="3" fill="url(#ra)" opacity="0.41"/><rect x="82" y="175.0" width="101" height="4" fill="url(#la)" opacity="0.26"/><rect x="482" y="175.0" width="96" height="4" fill="url(#ra)" opacity="0.26"/><rect x="27" y="179.5" width="157" height="2" fill="url(#la)" opacity="0.57"/><rect x="482" y="179.5" width="157" height="2" fill="url(#ra)" opacity="0.57"/><rect x="32" y="181.5" width="151" height="1.5" fill="url(#la)" opacity="0.37"/><rect x="482" y="181.5" width="145" height="1.5" fill="url(#ra)" opacity="0.37"/><rect x="29" y="183.0" width="154" height="1.5" fill="url(#la)" opacity="0.65"/><rect x="482" y="183.0" width="131" height="1.5" fill="url(#ra)" opacity="0.65"/><rect x="50" y="185.0" width="134" height="1" fill="url(#la)" opacity="0.69"/><rect x="482" y="185.0" width="133" height="1" fill="url(#ra)" opacity="0.69"/><rect x="38" y="189.0" width="145" height="3" fill="url(#lb)" opacity="0.75"/><rect x="482" y="189.0" width="133" height="3" fill="url(#rb)" opacity="0.75"/><rect x="61" y="192.0" width="122" height="1" fill="url(#la)" opacity="0.75"/><rect x="482" y="192.0" width="108" height="1" fill="url(#ra)" opacity="0.75"/><rect x="71" y="196.0" width="113" height="2" fill="url(#la)" opacity="0.3"/><rect x="482" y="196.0" width="91" height="2" fill="url(#ra)" opacity="0.3"/><rect x="43" y="198.5" width="141" height="2" fill="url(#la)" opacity="0.43"/><rect x="482" y="198.5" width="141" height="2" fill="url(#ra)" opacity="0.43"/><rect x="81" y="201.5" width="103" height="1" fill="url(#la)" opacity="0.83"/><rect x="482" y="201.5" width="93" height="1" fill="url(#ra)" opacity="0.83"/><rect x="46" y="203.5" width="137" height="1.5" fill="url(#la)" opacity="0.53"/><rect x="482" y="203.5" width="136" height="1.5" fill="url(#ra)" opacity="0.53"/><rect x="16" y="207.0" width="168" height="4" fill="url(#la)" opacity="0.41"/><rect x="482" y="207.0" width="157" height="4" fill="url(#ra)" opacity="0.41"/><rect x="26" y="211.0" width="157" height="2" fill="url(#la)" opacity="0.43"/><rect x="482" y="211.0" width="141" height="2" fill="url(#ra)" opacity="0.43"/><rect x="62" y="215.0" width="122" height="4" fill="url(#lb)" opacity="0.64"/><rect x="482" y="215.0" width="99" height="4" fill="url(#rb)" opacity="0.64"/><rect x="20" y="220.0" width="163" height="4" fill="url(#la)" opacity="0.84"/><rect x="482" y="220.0" width="142" height="4" fill="url(#ra)" opacity="0.84"/><rect x="47" y="224.0" width="137" height="1" fill="url(#lb)" opacity="0.68"/><rect x="482" y="224.0" width="128" height="1" fill="url(#rb)" opacity="0.68"/><rect x="61" y="228.0" width="122" height="4" fill="url(#lb)" opacity="0.73"/><rect x="482" y="228.0" width="97" height="4" fill="url(#rb)" opacity="0.73"/><rect x="36" y="232.0" width="148" height="1" fill="url(#la)" opacity="0.33"/><rect x="482" y="232.0" width="149" height="1" fill="url(#ra)" opacity="0.33"/><rect x="48" y="234.0" width="135" height="2" fill="url(#la)" opacity="0.26"/><rect x="482" y="234.0" width="133" height="2" fill="url(#ra)" opacity="0.26"/><rect x="78" y="236.5" width="106" height="1" fill="url(#lb)" opacity="0.29"/><rect x="482" y="236.5" width="84" height="1" fill="url(#rb)" opacity="0.29"/><rect x="44" y="237.5" width="140" height="3" fill="url(#lb)" opacity="0.7"/><rect x="482" y="237.5" width="118" height="3" fill="url(#rb)" opacity="0.7"/><rect x="63" y="241.0" width="120" height="1" fill="url(#lb)" opacity="0.37"/><rect x="482" y="241.0" width="94" height="1" fill="url(#rb)" opacity="0.37"/><rect x="59" y="243.0" width="124" height="4" fill="url(#la)" opacity="0.54"/><rect x="482" y="243.0" width="105" height="4" fill="url(#ra)" opacity="0.54"/><rect x="20" y="249.0" width="164" height="3" fill="url(#lb)" opacity="0.3"/><rect x="482" y="249.0" width="158" height="3" fill="url(#rb)" opacity="0.3"/><rect x="14" y="252.5" width="170" height="2" fill="url(#lb)" opacity="0.26"/><rect x="482" y="252.5" width="164" height="2" fill="url(#rb)" opacity="0.26"/><rect x="61" y="254.5" width="122" height="3" fill="url(#la)" opacity="0.54"/><rect x="482" y="254.5" width="119" height="3" fill="url(#ra)" opacity="0.54"/><rect x="49" y="258.5" width="134" height="2" fill="url(#lb)" opacity="0.85"/><rect x="482" y="258.5" width="129" height="2" fill="url(#rb)" opacity="0.85"/><rect x="69" y="260.5" width="114" height="2" fill="url(#la)" opacity="0.53"/><rect x="482" y="260.5" width="89" height="2" fill="url(#ra)" opacity="0.53"/><rect x="77" y="263.5" width="106" height="1.5" fill="url(#la)" opacity="0.8"/><rect x="482" y="263.5" width="112" height="1.5" fill="url(#ra)" opacity="0.8"/><rect x="36" y="265.0" width="148" height="1" fill="url(#lb)" opacity="0.41"/><rect x="482" y="265.0" width="132" height="1" fill="url(#rb)" opacity="0.41"/><rect x="45" y="270.5" width="138" height="2" fill="url(#la)" opacity="0.25"/><rect x="482" y="270.5" width="128" height="2" fill="url(#ra)" opacity="0.25"/><rect x="32" y="273.0" width="151" height="3" fill="url(#la)" opacity="0.46"/><rect x="482" y="273.0" width="127" height="3" fill="url(#ra)" opacity="0.46"/><rect x="18" y="276.0" width="166" height="1.5" fill="url(#lb)" opacity="0.75"/><rect x="482" y="276.0" width="138" height="1.5" fill="url(#rb)" opacity="0.75"/><g mask="url(#mkl)"><rect x="0" y="0" width="183.5" height="279" filter="url(#nz)" opacity="0.7"/></g><g mask="url(#mkr)"><rect x="482" y="0" width="183" height="279" filter="url(#nz)" opacity="0.7"/></g><g mask="url(#mkl)"><rect x="0" y="0" width="183.5" height="279" filter="url(#nl)" opacity="0.4"/></g><g mask="url(#mkr)"><rect x="482" y="0" width="183" height="279" filter="url(#nl)" opacity="0.4"/></g><rect x="183.5" y="0" width="298.5" height="279" filter="url(#ny)" opacity=".4"/><rect x="181.5" y="0" width="2" height="279" fill="#38f040" opacity=".8"/><rect x="482" y="0" width="2.5" height="279" fill="#38f040" opacity=".8"/></svg>
<div class="a" style="left:165px;top:162px;width:667px;height:2px;background:#000"></div>
<div class="a" style="left:165px;top:162px;width:2px;height:281px;background:#000"></div>
<div class="a" style="left:165px;top:441px;width:666px;height:2px;background:#000"></div>
<div class="a" style="left:163px;top:191px;width:3px;height:1px;background:#000"></div>
<div class="a" style="left:163px;top:241px;width:3px;height:1px;background:#000"></div>
<div class="a" style="left:163px;top:291px;width:3px;height:1px;background:#000"></div>
<div class="a" style="left:163px;top:341px;width:3px;height:1px;background:#000"></div>
<div class="a" style="left:163px;top:391px;width:3px;height:1px;background:#000"></div>
<div class="a" style="left:831px;top:202px;width:8px;height:1px;background:#000"></div>
<div class="a" style="left:831px;top:242px;width:8px;height:1px;background:#000"></div>
<div class="a" style="left:831px;top:282px;width:8px;height:1px;background:#000"></div>
<div class="a" style="left:831px;top:322px;width:8px;height:1px;background:#000"></div>
<div class="a" style="left:831px;top:362px;width:8px;height:1px;background:#000"></div>
<div class="a" style="left:830.5px;top:402px;width:7.5px;height:40.5px;background:#0000f2"></div>
<div class="a" style="left:176px;top:174px;width:132px;height:50px;background:rgba(0,30,40,.62)"></div>
<span class="t" style="left:177.4px;top:172.5px;font-size:11px;line-height:14px;letter-spacing:0.043px;color:#fff;">MR: -41.90 dBm</span>
<span class="t" style="left:177.4px;top:184.8px;font-size:11px;line-height:14px;letter-spacing:-0.011px;color:#fff;">805.75 MHz</span>
<span class="t" style="left:177.4px;top:196.7px;font-size:11px;line-height:14px;letter-spacing:-0.024px;color:#fff;">303.507 us</span>
<span class="t" style="left:177.4px;top:208.7px;font-size:11px;line-height:14px;letter-spacing:-0.053px;color:#fff;">4/27/2015 7:38:16.570376</span>
<div class="a" style="left:166px;top:416.5px;width:665px;height:1.3px;background:#a08868"></div>
<span class="t" style="left:154.9px;top:407.5px;font-size:10px;line-height:13px;color:#7a1010;">T</span>
<svg class="a" style="left:161.5px;top:412px" width="5" height="6" viewBox="0 0 5 6"><path d="M0 0L5 3 0 6z" fill="#7a1010"/></svg>
<div class="a" style="left:176px;top:421px;width:9px;height:14.5px;background:#0a2a5a;border-radius:1px"></div>
<span class="t" style="left:177.2px;top:420.5px;font-size:12px;line-height:16px;color:#e6e620;font-weight:700;">*</span>
<div class="a" style="left:487.5px;top:392px;width:21px;height:12.5px;background:rgba(70,62,0,.85)"></div>
<span class="t" style="left:488.9px;top:391px;font-size:11px;line-height:14px;letter-spacing:0.545px;color:#fff;">MR</span>
<svg class="a" style="left:487.5px;top:403.5px" width="16" height="16" viewBox="0 0 16 16"><path d="M8 1 L15 8 L8 15 L1 8 Z" fill="#fff" stroke="#5a5a30" stroke-width=".8"/></svg>
<div class="a" style="left:842px;top:163px;width:17px;height:279px;background:linear-gradient(90deg,#e4e4e4,#f4f4f4 40%,#f0f0f0)"></div>
<div class="a" style="left:843px;top:185px;width:15px;height:241px;border:1px solid #9a9a9a;border-radius:2px;background:linear-gradient(90deg,#f2f2f2,#dcdcdc 50%,#cdcdcd 52%,#d8d8d8)"></div>
<svg class="a" style="left:847px;top:169px" width="7" height="4" viewBox="0 0 7 4"><path d="M0 4h7L3.5 0z" fill="#404040"/></svg>
<svg class="a" style="left:847px;top:432px" width="7" height="4" viewBox="0 0 7 4"><path d="M0 0h7L3.5 4z" fill="#404040"/></svg>
<div class="a" style="left:847px;top:303.5px;width:7px;height:1px;background:#6a6a6a"></div>
<div class="a" style="left:847px;top:305.5px;width:7px;height:1px;background:#6a6a6a"></div>
<div class="a" style="left:847px;top:307.5px;width:7px;height:1px;background:#6a6a6a"></div>
<div class="btn" style="left:22.5px;top:447.5px;width:69.5px;height:18.5px;"></div>
<span class="t" style="left:29.9px;top:449.05px;font-size:12.5px;line-height:16px;letter-spacing:-0.190px;">Autoscale</span>
<div class="knob" style="left:108.8px;top:453px"></div>
<span class="t" style="left:121.9px;top:448.5px;font-size:12.5px;line-height:16px;letter-spacing:-0.201px;transform:scaleX(0.906);transform-origin:0 50%;">CF:</span>
<span class="t" style="left:145.4px;top:448.5px;font-size:12.5px;line-height:16px;letter-spacing:-0.121px;">806.00 MHz</span>
<div class="knob" style="left:728.3px;top:453px"></div>
<span class="t" style="left:740.9px;top:448.5px;font-size:12.5px;line-height:16px;letter-spacing:-0.194px;">Span:</span>
<span class="t" style="left:778.4px;top:448.5px;font-size:12.5px;line-height:16px;letter-spacing:-0.139px;">40.00 MHz</span>
<span class="t" style="left:885.4px;top:156px;font-size:15px;line-height:20px;letter-spacing:-0.061px;">Cell ID:</span>
<span class="t" style="left:962.4px;top:156px;font-size:15px;line-height:20px;letter-spacing:0.056px;">127</span>
<span class="t" style="left:885.4px;top:174px;font-size:15px;line-height:20px;letter-spacing:0.241px;">Group ID:</span>
<span class="t" style="left:962.4px;top:174px;font-size:15px;line-height:20px;letter-spacing:0.256px;">42</span>
<span class="t" style="left:885.4px;top:192px;font-size:15px;line-height:20px;letter-spacing:0.201px;">Sector ID:</span>
<span class="t" style="left:962.9px;top:192px;font-size:15px;line-height:20px;">1</span>
<span class="t" style="left:885.4px;top:210px;font-size:15px;line-height:20px;letter-spacing:-0.120px;">Freq Error:</span>
<span class="t" style="left:962.4px;top:210px;font-size:15px;line-height:20px;letter-spacing:0.017px;">-1.491 Hz</span>
<span class="t" style="left:885.4px;top:258px;font-size:15px;line-height:20px;letter-spacing:0.051px;">Marker:</span>
<span class="t" style="left:962.4px;top:258px;font-size:15px;line-height:20px;letter-spacing:-0.564px;">MR</span>
<span class="t" style="left:885.4px;top:276px;font-size:15px;line-height:20px;letter-spacing:-0.123px;">Symbols:</span>
<span class="t" style="left:962.9px;top:276px;font-size:15px;line-height:20px;">1</span>
<span class="t" style="left:885.4px;top:294px;font-size:15px;line-height:20px;letter-spacing:-0.287px;">Subcarrier:</span>
<span class="t" style="left:962.4px;top:294px;font-size:15px;line-height:20px;letter-spacing:0.171px;">-18</span>
<span class="t" style="left:885.4px;top:312.5px;font-size:15px;line-height:20px;letter-spacing:0.803px;">Type:</span>
<span class="t" style="left:962.4px;top:312.5px;font-size:15px;line-height:20px;letter-spacing:-0.300px;transform:scaleX(0.848);transform-origin:0 50%;">PSS</span>
<span class="t" style="left:885.4px;top:330px;font-size:15px;line-height:20px;letter-spacing:-0.102px;">Magnitude:</span>
<span class="t" style="left:962.4px;top:330px;font-size:15px;line-height:20px;letter-spacing:0.131px;">1.002</span>
<span class="t" style="left:885.4px;top:348px;font-size:15px;line-height:20px;letter-spacing:-0.167px;">Phase:</span>
<span class="t" style="left:962.4px;top:348px;font-size:15px;line-height:20px;letter-spacing:0.471px;">39.9 °</span>
<svg class="a" style="left:1388px;top:141px" width="325" height="324.5" viewBox="0 0 325 324.5"><rect width="325" height="324.5" fill="#000"/><rect x="137.4" y="55.4" width="3.2" height="3.2" fill="#2f7fe8"/><rect x="136.4" y="54.4" width="5.2" height="5.2" fill="#2f7fe8" opacity=".25"/><rect x="168.9" y="53.4" width="3.2" height="3.2" fill="#3a86ee"/><rect x="167.9" y="52.4" width="5.2" height="5.2" fill="#3a86ee" opacity=".25"/><rect x="107.4" y="67.4" width="3.2" height="3.2" fill="#2f7fe8"/><rect x="106.4" y="66.4" width="5.2" height="5.2" fill="#2f7fe8" opacity=".25"/><circle cx="76.0" cy="98.0" r="2.2" fill="#2f7fe8"/><circle cx="64.5" cy="116.0" r="2.0" fill="#2f7fe8"/><rect x="251.1" y="100.6" width="2.8" height="2.8" fill="#3a6fd8"/><rect x="250.1" y="99.6" width="4.8" height="4.8" fill="#3a6fd8" opacity=".25"/><path d="M44.0 162.5H66.0M55.0 150.5V174.5" stroke="#8a8a8a" stroke-width=".8"/><circle cx="55.0" cy="162.5" r="2.4" fill="#2fe08c"/><path d="M261.0 162.5H283.0M272.0 150.5V174.5" stroke="#8a8a8a" stroke-width=".8"/><circle cx="272.0" cy="162.5" r="2.4" fill="#2a9fb4"/><circle cx="57.5" cy="189.5" r="2.6" fill="#2d6cf0"/><rect x="64.1" y="207.6" width="2.8" height="2.8" fill="none" stroke="#3a86ee" stroke-width=".8"/><rect x="81.6" y="235.1" width="2.8" height="2.8" fill="none" stroke="#8a98a8" stroke-width=".8"/><rect x="107.4" y="255.4" width="3.2" height="3.2" fill="#2f7fe8"/><rect x="106.4" y="254.4" width="5.2" height="5.2" fill="#2f7fe8" opacity=".25"/><rect x="117.6" y="260.1" width="2.8" height="2.8" fill="none" stroke="#8fb4e8" stroke-width=".8"/><rect x="169.4" y="269.4" width="3.2" height="3.2" fill="#2f7fe8"/><rect x="168.4" y="268.4" width="5.2" height="5.2" fill="#2f7fe8" opacity=".25"/><rect x="264.4" y="193.4" width="3.2" height="3.2" fill="#5a84c8"/><rect x="263.4" y="192.4" width="5.2" height="5.2" fill="#5a84c8" opacity=".25"/><circle cx="252.0" cy="224.0" r="2.0" fill="#2f7fe8"/></svg>
<span class="t" style="left:1627.9px;top:207.3px;font-size:11px;line-height:14px;letter-spacing:0.295px;color:#fff;">MR</span>
<svg class="a" style="left:1626.5px;top:220.8px" width="15" height="15" viewBox="0 0 15 15"><path d="M7.5 1 L14 7.5 L7.5 14 L1 7.5 Z" fill="#fff" stroke="#000" stroke-width=".8"/></svg>
<span class="t" style="left:1399.4px;top:443px;font-size:11px;line-height:14px;letter-spacing:0.041px;color:#d9d92a;font-weight:700;">* ... More&gt;&gt;</span>
<span class="t" style="left:55.4px;top:511.5px;font-size:16px;line-height:21px;letter-spacing:-0.267px;color:#2f8a3c;transform:scaleX(0.904);transform-origin:0 50%;">Pass</span>
<span class="t" style="left:158.4px;top:514px;font-size:12.5px;line-height:16px;">Ref Detection: Avg (VRMS)</span>
<span class="t" style="left:702.9px;top:514px;font-size:12.5px;line-height:16px;letter-spacing:-0.433px;">Normal</span>
<div class="btn" style="left:794px;top:512px;width:50px;height:22px;"></div>
<span class="t" style="left:804.9px;top:515.3px;font-size:12.5px;line-height:16px;letter-spacing:-0.179px;transform:scaleX(0.921);transform-origin:0 50%;">Clear</span>
<div class="knob" style="left:20.8px;top:544px"></div>
<span class="t" style="left:33.9px;top:539px;font-size:12.5px;line-height:16px;letter-spacing:0.086px;">0.00 dBm</span>
<div class="knob" style="left:20.8px;top:567.5px"></div>
<span class="t" style="left:33.9px;top:560px;font-size:12.5px;line-height:16px;letter-spacing:0.212px;">dB/div:</span>
<span class="t" style="left:33.9px;top:577px;font-size:12.5px;line-height:16px;letter-spacing:0.087px;">10.0 dB</span>
<span class="t" style="left:31.9px;top:682.5px;font-size:12.5px;line-height:16px;letter-spacing:0.011px;">-100.00 dBm</span>
<svg class="a" style="left:118.6px;top:536.7px" width="729.6" height="165.6" viewBox="0 0 729.6 165.6"><rect width="729.6" height="165.6" fill="#000"/><path d="M0 17.05H729.6M0 33.70H729.6M0 50.35H729.6M0 67.00H729.6M0 83.65H729.6M0 100.30H729.6M0 116.95H729.6M0 133.60H729.6M0 150.25H729.6" stroke="#b4b4b4" stroke-width="1" fill="none"/><path d="M73.0 0V165.6M145.9 0V165.6M218.9 0V165.6M291.8 0V165.6M364.8 0V165.6M437.8 0V165.6M510.7 0V165.6M583.7 0V165.6M656.6 0V165.6" stroke="#cdcdcd" stroke-width="1.5" fill="none"/><polyline points="-0.6,21.3 146.0,21.3 218.9,9.3" fill="none" stroke="#a9cfa9" stroke-width="1.1"/><polyline points="511.4,9.3 584.4,20.8 656.9,20.8 656.9,21.8 729.4,21.8" fill="none" stroke="#a9cfa9" stroke-width="1.1"/><polyline points="-0.3,149.5 1.2,148.6 2.7,148.7 4.2,148.7 5.7,149.7 7.2,149.0 8.7,148.6 10.2,148.7 11.7,148.5 13.2,148.1 14.7,148.2 16.2,149.4 17.7,148.5 19.2,149.5 20.7,148.4 22.2,148.4 23.7,148.8 25.2,148.3 26.8,148.6 28.3,149.5 29.8,149.4 31.3,149.3 32.8,149.0 34.3,149.4 35.8,149.5 37.3,148.8 38.8,149.1 40.3,148.0 41.8,149.1 43.3,148.7 44.8,149.1 46.3,149.0 47.8,148.4 49.3,148.0 50.8,149.4 52.3,148.1 53.8,148.7 55.3,148.4 56.8,148.4 58.3,149.1 59.8,149.4 61.3,148.3 62.8,148.9 64.3,148.3 65.8,148.7 67.3,148.5 68.8,148.1 70.3,148.1 71.8,148.2 73.3,149.3 74.8,148.6 76.3,148.2 77.8,149.3 79.3,149.4 80.9,148.5 82.4,148.0 83.9,148.1 85.4,147.9 86.9,148.3 88.4,147.9 89.9,148.1 91.4,148.2 92.9,148.7 94.4,149.2 95.9,148.9 97.4,148.4 98.9,148.4 100.4,148.6 101.9,148.3 103.4,148.3 104.9,147.8 106.4,148.1 107.9,148.9 109.5,147.2 111.0,147.4 112.6,147.3 114.1,147.3 115.6,145.9 117.2,145.6 118.7,145.2 120.2,145.1 121.8,144.8 123.3,145.2 124.9,144.7 126.4,144.4 127.9,142.7 129.4,142.3 130.9,143.0 132.4,143.0 133.9,141.9 135.4,141.7 137.0,140.4 138.5,140.7 140.0,141.2 141.5,140.6 143.0,140.3 144.5,140.1 146.0,138.6 147.5,138.0 149.1,137.6 150.6,137.8 152.2,137.7 153.7,137.7 155.2,137.0 156.8,136.4 158.3,136.2 159.9,135.3 161.4,135.1 162.9,133.9 164.5,134.7 166.0,133.4 167.5,134.1 169.1,133.2 170.6,132.3 172.2,131.6 173.7,131.4 175.2,131.6 176.8,131.3 178.3,130.0 179.9,129.5 181.4,129.8 182.9,129.5 184.5,128.9 186.0,128.2 187.6,128.4 189.1,127.1 190.6,127.2 192.2,127.0 193.7,127.5 195.2,126.6 196.8,126.6 198.3,125.5 199.9,124.8 201.4,124.4 203.0,124.9 204.6,123.8 206.2,122.5 207.8,121.4 209.4,121.5 210.9,121.1 212.5,120.0 214.1,119.1 215.7,119.1 217.3,118.8 218.9,117.1 220.5,115.6 222.2,114.9 223.8,113.8 225.4,113.1 226.9,110.2 228.4,108.9 229.9,106.7 231.9,93.3 232.9,74.8 233.9,67.1 233.9,67.6 235.4,66.9 236.9,67.4 238.4,66.8 239.9,66.8 241.4,67.4 242.9,66.9 244.4,67.6 245.9,67.1 247.4,66.8 248.9,66.8 250.4,67.0 251.9,67.3 253.4,67.5 254.9,66.7 256.4,67.0 257.9,66.8 259.4,67.6 260.9,66.7 262.4,66.7 263.9,66.7 265.4,67.0 266.9,67.5 268.4,67.5 269.9,67.3 271.4,67.6 272.9,67.5 274.4,66.9 275.9,66.8 277.4,67.5 278.9,67.3 280.4,66.6 281.9,67.3 283.4,67.0 284.9,67.0 286.4,66.9 287.9,66.8 289.4,66.6 290.9,66.9 292.4,67.0 293.9,67.6 295.4,66.7 296.9,67.6 298.4,66.8 299.9,67.0 301.4,67.4 302.9,67.4 304.4,67.0 305.9,66.6 307.4,67.1 308.9,67.0 310.4,67.5 311.9,66.8 313.4,67.0 314.9,67.5 316.4,66.6 317.9,67.0 319.4,67.4 320.9,67.4 322.4,66.6 323.9,66.6 325.4,66.7 326.9,67.5 328.4,66.9 329.9,67.3 331.4,67.5 332.9,66.9 334.4,66.9 335.9,67.6 337.4,67.2 338.9,66.9 340.4,67.3 341.9,66.9 343.4,66.9 344.9,66.6 346.4,67.4 347.9,67.5 349.4,67.2 350.9,67.5 352.4,66.6 353.9,66.8 355.4,67.1 356.9,67.6 358.4,67.6 359.9,67.0 361.4,66.9 362.9,67.0 364.4,67.1 365.9,67.5 367.4,66.8 368.9,67.4 370.4,67.3 371.9,67.4 373.4,67.4 374.9,67.2 376.4,66.9 377.9,66.9 379.4,67.0 380.9,67.4 382.4,66.7 383.9,66.8 385.4,67.4 386.9,66.8 388.4,66.7 389.9,66.6 391.4,67.2 392.9,66.9 394.4,67.6 395.9,67.5 397.4,67.6 398.9,66.9 400.4,66.7 401.9,66.7 403.4,67.1 404.9,67.3 406.4,67.0 407.9,66.8 409.4,67.0 410.9,67.2 412.4,67.3 413.9,67.3 415.4,67.4 416.9,67.3 418.4,66.7 419.9,67.4 421.4,66.9 422.9,67.2 424.4,67.0 425.9,67.3 427.4,66.8 428.9,66.8 430.4,66.8 431.9,66.8 433.4,67.5 434.9,67.2 436.4,66.9 437.9,67.0 439.4,67.6 440.9,67.1 442.4,66.8 443.9,67.4 445.4,67.3 446.9,67.6 448.4,66.7 449.9,67.1 451.4,67.4 452.9,67.4 454.4,67.5 455.9,66.6 457.4,66.9 458.9,66.7 460.4,66.8 461.9,67.6 463.4,67.2 464.9,67.5 466.4,67.0 467.9,67.5 469.4,67.0 470.9,66.9 472.4,67.4 473.9,67.5 475.4,66.7 476.9,67.2 478.4,67.2 479.9,66.8 481.4,67.0 482.9,66.7 484.4,66.8 485.9,66.9 487.4,67.2 488.9,67.3 490.4,66.8 491.9,66.6 493.4,66.9 494.9,67.1 494.9,67.4 496.2,80.8 497.4,103.0 498.9,107.3 500.4,112.8 502.1,113.9 503.7,114.6 505.4,116.2 506.9,117.3 508.4,118.1 509.9,118.9 511.4,118.6 512.9,119.2 514.4,120.4 516.0,120.3 517.5,120.5 519.0,120.9 520.5,122.4 522.1,121.7 523.6,122.5 525.1,122.6 526.6,123.1 528.1,124.2 529.7,124.8 531.2,124.2 532.7,124.3 534.2,125.5 535.7,125.1 537.3,125.2 538.8,127.0 540.3,126.6 541.8,127.6 543.4,127.4 544.9,128.5 546.4,128.2 547.9,128.2 549.4,128.4 551.0,129.7 552.5,130.3 554.0,131.1 555.5,130.3 557.1,131.5 558.6,131.6 560.1,132.2 561.6,132.1 563.1,132.7 564.7,133.6 566.2,134.6 567.7,133.8 569.2,134.8 570.7,135.7 572.3,136.4 573.8,135.6 575.3,136.0 576.8,137.7 578.4,138.2 579.9,137.8 581.4,137.6 582.9,139.4 584.5,139.0 586.0,140.2 587.6,140.2 589.1,140.9 590.6,140.3 592.2,141.7 593.7,141.2 595.2,142.0 596.8,143.1 598.3,143.5 599.9,142.9 601.4,143.3 602.9,144.0 604.4,144.5 605.9,144.6 607.4,144.5 608.9,145.1 610.4,146.2 611.9,146.8 613.4,145.7 614.9,146.9 616.4,147.5 617.9,146.7 619.4,148.3 621.0,147.3 622.5,148.1 624.1,148.1 625.7,148.3 627.3,147.9 628.8,148.1 630.4,148.5 632.0,148.3 633.5,148.8 635.1,148.5 636.7,148.6 638.3,148.0 639.8,149.0 641.4,148.9 642.9,148.5 644.4,149.3 646.0,149.4 647.5,148.9 649.0,148.4 650.5,148.9 652.0,148.3 653.5,148.4 655.1,148.9 656.6,148.3 658.1,148.9 659.6,149.0 661.1,148.3 662.6,149.2 664.2,148.3 665.7,149.4 667.2,149.5 668.7,149.0 670.2,148.3 671.7,149.0 673.3,148.8 674.8,149.8 676.3,148.5 677.8,149.6 679.3,149.9 680.8,149.5 682.4,149.6 683.9,148.6 685.4,149.9 686.9,149.1 688.4,149.8 690.0,149.8 691.5,148.6 693.0,149.6 694.5,149.8 696.0,148.5 697.5,148.9 699.1,149.6 700.6,148.6 702.1,149.8 703.6,148.8 705.1,149.7 706.6,148.6 708.2,149.2 709.7,149.9 711.2,148.8 712.7,148.8 714.2,149.2 715.7,148.9 717.3,148.5 718.8,148.7 720.3,148.7 721.8,150.0 723.3,149.6 724.8,149.9 726.4,148.8 727.9,149.7 729.4,149.3" fill="none" stroke="#e9e94a" stroke-width="1.1"/><rect x="9.9" y="10.8" width="82" height="24" fill="#000"/><rect x="364.4" y="151.3" width="1" height="14" fill="#c4c4c4"/></svg>
<span class="t" style="left:129.4px;top:546px;font-size:11px;line-height:14px;letter-spacing:0.043px;color:#fff;">MR: -40.18 dBm</span>
<span class="t" style="left:129.4px;top:557.8px;font-size:11px;line-height:14px;letter-spacing:0.024px;color:#fff;">805.750 MHz</span>
<span class="t" style="left:126.9px;top:605.5px;font-size:11px;line-height:14px;letter-spacing:0.319px;color:#fff;">CL</span>
<span class="t" style="left:198.4px;top:605.5px;font-size:11px;line-height:14px;letter-spacing:0.616px;color:#fff;">BL</span>
<span class="t" style="left:271.4px;top:605.5px;font-size:11px;line-height:14px;letter-spacing:0.366px;color:#fff;">AL</span>
<span class="t" style="left:639.4px;top:605.5px;font-size:11px;line-height:14px;letter-spacing:-0.291px;color:#fff;">AU</span>
<span class="t" style="left:711.4px;top:605.5px;font-size:11px;line-height:14px;letter-spacing:0.209px;color:#fff;">BU</span>
<span class="t" style="left:784.4px;top:605.5px;font-size:11px;line-height:14px;letter-spacing:0.405px;color:#fff;">CU</span>
<span class="t" style="left:472.4px;top:576.5px;font-size:11px;line-height:14px;letter-spacing:0.045px;color:#fff;">MR</span>
<svg class="a" style="left:472.5px;top:590.1px" width="15" height="15" viewBox="0 0 15 15"><path d="M7.5 1 L14 7.5 L7.5 14 L1 7.5 Z" fill="#fff" stroke="#000" stroke-width=".8"/></svg>
<span class="t" style="left:463.4px;top:687.5px;font-size:11.5px;line-height:15px;letter-spacing:-0.116px;color:#9fd89f;">abs</span>
<span class="t" style="left:484.9px;top:687.5px;font-size:11.5px;line-height:15px;letter-spacing:-0.027px;color:#fff;">rel</span>
<div class="btn" style="left:24.5px;top:702.5px;width:78.5px;height:21.5px;"></div>
<span class="t" style="left:36.9px;top:705.55px;font-size:12.5px;line-height:16px;letter-spacing:-0.190px;">Autoscale</span>
<div class="knob" style="left:114.8px;top:712px"></div>
<span class="t" style="left:128.4px;top:707px;font-size:12.5px;line-height:16px;letter-spacing:-0.201px;transform:scaleX(0.880);transform-origin:0 50%;">CF:</span>
<span class="t" style="left:151.9px;top:707px;font-size:12.5px;line-height:16px;letter-spacing:-0.171px;">806.00 MHz</span>
<div class="knob" style="left:718.8px;top:712px"></div>
<span class="t" style="left:732.4px;top:707px;font-size:12.5px;line-height:16px;letter-spacing:-0.294px;">Span:</span>
<span class="t" style="left:769.4px;top:707px;font-size:12.5px;line-height:16px;letter-spacing:-0.225px;">50.0 MHz</span>
<div class="a" style="left:17.5px;top:729px;width:844px;height:6.8px;background:#9b9b9b"></div>
<span class="t" style="left:25.4px;top:747.5px;font-size:12.5px;line-height:16px;letter-spacing:0.170px;">Ref: Total Power</span>
<span class="t" style="left:25.4px;top:779.5px;font-size:12.5px;line-height:16px;letter-spacing:0.108px;">-14.47 dBm</span>
<div class="a" style="left:167.5px;top:736px;width:694px;height:104.5px;background:#fff;border:1px solid #000"></div>
<div class="a" style="left:168.5px;top:737px;width:677.5px;height:20.5px;background:linear-gradient(#fff,#fbfbfc 50%,#f1f2f4)"></div>
<div class="a" style="left:203.5px;top:758px;width:39.5px;height:21.5px;background:#b7c9e4"></div>
<svg class="a" style="left:168.5px;top:737px" width="677.5" height="87" viewBox="0 0 677.5 87"><path d="M35 2V19M75 2V19M155 2V19M235 2V19M315.5 2V19M385.5 2V19M460.5 2V19M530.5 2V19M620.5 2V19" stroke="#dfe2e7" stroke-width="1"/><path d="M35 21V86M75 21V86M155 21V86M235 21V86M315.5 21V86M385.5 21V86M460.5 21V86M530.5 21V86M620.5 21V86M0 21H677.5M0 43H677.5M0 65H677.5M0 86.5H677.5" stroke="#a6a6a6" stroke-width="1"/></svg>
<span class="t" style="left:176.4px;top:741px;font-size:11px;line-height:14px;letter-spacing:-0.105px;color:#222;">Row</span>
<span class="t" style="left:210.4px;top:741px;font-size:11px;line-height:14px;letter-spacing:0.007px;color:#222;">Offset</span>
<span class="t" style="left:250.4px;top:741px;font-size:11px;line-height:14px;letter-spacing:-0.271px;color:#222;">Start Freq</span>
<span class="t" style="left:330.4px;top:741px;font-size:11px;line-height:14px;letter-spacing:-0.235px;color:#222;">Stop Freq</span>
<span class="t" style="left:410.4px;top:741px;font-size:11px;line-height:14px;letter-spacing:-0.036px;color:#222;">Peak Abs</span>
<span class="t" style="left:490.9px;top:741px;font-size:11px;line-height:14px;letter-spacing:-0.133px;color:#222;">Margin Abs</span>
<span class="t" style="left:560.9px;top:741px;font-size:11px;line-height:14px;letter-spacing:-0.243px;color:#222;">Peak Rel</span>
<span class="t" style="left:635.9px;top:741px;font-size:11px;line-height:14px;letter-spacing:-0.249px;color:#222;">Margin Rel</span>
<span class="t" style="left:705.4px;top:741px;font-size:11px;line-height:14px;letter-spacing:-0.419px;color:#222;">@Freq</span>
<span class="t" style="left:795.9px;top:741px;font-size:11px;line-height:14px;letter-spacing:-0.075px;color:#222;">Integ Abs</span>
<div class="a" style="left:168.5px;top:758px;width:675px;height:65px;overflow:hidden">
<span class="t" style="left:3.4px;top:3.7px;font-size:11px;line-height:14px;">1</span>
<span class="t" style="left:37.9px;top:3.7px;font-size:11px;line-height:14px;letter-spacing:-0.181px;">CL</span>
<span class="t" style="left:77.9px;top:3.7px;font-size:11px;line-height:14px;letter-spacing:-0.162px;">-15.000 MHz</span>
<span class="t" style="left:157.9px;top:3.7px;font-size:11px;line-height:14px;letter-spacing:-0.162px;">-10.050 MHz</span>
<span class="t" style="left:238.4px;top:3.7px;font-size:11px;line-height:14px;letter-spacing:-0.217px;">-88.52 dBm</span>
<span class="t" style="left:317.9px;top:3.7px;font-size:11px;line-height:14px;letter-spacing:-0.056px;">-75.52 dB</span>
<span class="t" style="left:387.9px;top:3.7px;font-size:11px;line-height:14px;letter-spacing:-0.100px;">-74.05 dBc</span>
<span class="t" style="left:462.9px;top:3.7px;font-size:11px;line-height:14px;letter-spacing:-0.129px;">-- dB</span>
<span class="t" style="left:532.9px;top:3.7px;font-size:11px;line-height:14px;letter-spacing:-0.152px;">-20.812500 MHz</span>
<span class="t" style="left:622.9px;top:3.7px;font-size:11px;line-height:14px;letter-spacing:-0.217px;">-69.32 dBm</span>
<span class="t" style="left:3.4px;top:25.7px;font-size:11px;line-height:14px;">2</span>
<span class="t" style="left:37.9px;top:25.7px;font-size:11px;line-height:14px;letter-spacing:0.116px;">BL</span>
<span class="t" style="left:77.9px;top:25.7px;font-size:11px;line-height:14px;letter-spacing:-0.162px;">-10.050 MHz</span>
<span class="t" style="left:157.9px;top:25.7px;font-size:11px;line-height:14px;letter-spacing:-0.216px;">-5.050 MHz</span>
<span class="t" style="left:238.4px;top:25.7px;font-size:11px;line-height:14px;letter-spacing:-0.217px;">-83.30 dBm</span>
<span class="t" style="left:317.9px;top:25.7px;font-size:11px;line-height:14px;letter-spacing:-0.056px;">-70.80 dB</span>
<span class="t" style="left:387.9px;top:25.7px;font-size:11px;line-height:14px;letter-spacing:-0.100px;">-68.83 dBc</span>
<span class="t" style="left:462.9px;top:25.7px;font-size:11px;line-height:14px;letter-spacing:-0.129px;">-- dB</span>
<span class="t" style="left:532.9px;top:25.7px;font-size:11px;line-height:14px;letter-spacing:-0.152px;">-15.062500 MHz</span>
<span class="t" style="left:622.9px;top:25.7px;font-size:11px;line-height:14px;letter-spacing:-0.136px;">-67.11 dBm</span>
<span class="t" style="left:3.4px;top:47.7px;font-size:11px;line-height:14px;">3</span>
<span class="t" style="left:37.9px;top:47.7px;font-size:11px;line-height:14px;letter-spacing:0.116px;">AL</span>
<span class="t" style="left:77.9px;top:47.7px;font-size:11px;line-height:14px;letter-spacing:-0.216px;">-5.050 MHz</span>
<span class="t" style="left:157.9px;top:47.7px;font-size:11px;line-height:14px;letter-spacing:-0.192px;">-50.000 kHz</span>
<span class="t" style="left:238.4px;top:47.7px;font-size:11px;line-height:14px;letter-spacing:-0.217px;">-71.69 dBm</span>
<span class="t" style="left:317.9px;top:47.7px;font-size:11px;line-height:14px;letter-spacing:-0.056px;">-66.26 dB</span>
<span class="t" style="left:387.9px;top:47.7px;font-size:11px;line-height:14px;letter-spacing:-0.100px;">-57.22 dBc</span>
<span class="t" style="left:462.9px;top:47.7px;font-size:11px;line-height:14px;letter-spacing:-0.129px;">-- dB</span>
<span class="t" style="left:532.9px;top:47.7px;font-size:11px;line-height:14px;letter-spacing:-0.152px;">-10.000000 MHz</span>
<span class="t" style="left:622.9px;top:47.7px;font-size:11px;line-height:14px;letter-spacing:-0.217px;">-56.85 dBm</span>
</div>
<div class="a" style="left:846px;top:737px;width:15px;height:86px;background:linear-gradient(90deg,#e4e4e4,#f4f4f4 40%,#f0f0f0)"></div>
<div class="a" style="left:847px;top:756px;width:13px;height:21.5px;border:1px solid #9a9a9a;border-radius:2px;background:linear-gradient(90deg,#f2f2f2,#dcdcdc 50%,#cdcdcd 52%,#d8d8d8)"></div>
<svg class="a" style="left:850px;top:743px" width="7" height="4" viewBox="0 0 7 4"><path d="M0 4h7L3.5 0z" fill="#404040"/></svg>
<svg class="a" style="left:850px;top:813px" width="7" height="4" viewBox="0 0 7 4"><path d="M0 0h7L3.5 4z" fill="#404040"/></svg>
<div class="a" style="left:850px;top:764.75px;width:7px;height:1px;background:#6a6a6a"></div>
<div class="a" style="left:850px;top:766.75px;width:7px;height:1px;background:#6a6a6a"></div>
<div class="a" style="left:850px;top:768.75px;width:7px;height:1px;background:#6a6a6a"></div>
<div class="a" style="left:168.5px;top:823.5px;width:692.5px;height:16px;background:linear-gradient(#e6e6e6,#f4f4f4 40%,#f0f0f0)"></div>
<div class="a" style="left:186px;top:824.5px;width:566px;height:14px;border:1px solid #9a9a9a;border-radius:2px;background:linear-gradient(#f2f2f2,#dcdcdc 50%,#cdcdcd 52%,#d8d8d8)"></div>
<svg class="a" style="left:174px;top:828px" width="4" height="7" viewBox="0 0 4 7"><path d="M4 0v7L0 3.5z" fill="#404040"/></svg>
<svg class="a" style="left:834px;top:828px" width="4" height="7" viewBox="0 0 4 7"><path d="M0 0v7L4 3.5z" fill="#404040"/></svg>
<div class="a" style="left:466.5px;top:828px;width:1px;height:7px;background:#6a6a6a"></div>
<div class="a" style="left:468.5px;top:828px;width:1px;height:7px;background:#6a6a6a"></div>
<div class="a" style="left:470.5px;top:828px;width:1px;height:7px;background:#6a6a6a"></div>
<span class="t" style="left:916.4px;top:511.5px;font-size:16px;line-height:21px;letter-spacing:-0.267px;color:#2f8a3c;transform:scaleX(0.890);transform-origin:0 50%;">Pass</span>
<span class="t" style="left:1019.4px;top:514px;font-size:12.5px;line-height:16px;">Ref Detection: Avg (VRMS)</span>
<span class="t" style="left:1563.4px;top:514px;font-size:12.5px;line-height:16px;letter-spacing:-0.349px;">Normal</span>
<div class="btn" style="left:1655.5px;top:512px;width:49.5px;height:22px;"></div>
<span class="t" style="left:1665.4px;top:515.3px;font-size:12.5px;line-height:16px;letter-spacing:-0.179px;transform:scaleX(0.939);transform-origin:0 50%;">Clear</span>
<div class="knob" style="left:881.8px;top:544px"></div>
<span class="t" style="left:894.4px;top:539px;font-size:12.5px;line-height:16px;letter-spacing:0.086px;">0.00 dBm</span>
<div class="knob" style="left:881.8px;top:567.5px"></div>
<span class="t" style="left:894.4px;top:560px;font-size:12.5px;line-height:16px;letter-spacing:0.283px;">dB/div:</span>
<span class="t" style="left:894.4px;top:577px;font-size:12.5px;line-height:16px;letter-spacing:0.087px;">10.0 dB</span>
<span class="t" style="left:892.4px;top:682.5px;font-size:12.5px;line-height:16px;letter-spacing:0.102px;">-100.00 dBm</span>
<svg class="a" style="left:979.3px;top:536.7px" width="729.9" height="165.6" viewBox="0 0 729.9 165.6"><rect width="729.9" height="165.6" fill="#000"/><rect x="-0.3" y="114.3" width="73" height="51.3" fill="#0b4866"/><rect x="93.7" y="97.3" width="73" height="68.3" fill="#0b4866"/><rect x="564.7" y="97.3" width="72" height="68.3" fill="#0b4866"/><rect x="658.2" y="114.3" width="71.5" height="51.3" fill="#0b4866"/><path d="M0 17.05H729.9M0 33.70H729.9M0 50.35H729.9M0 67.00H729.9M0 83.65H729.9M0 100.30H729.9M0 116.95H729.9M0 133.60H729.9M0 150.25H729.9" stroke="#b4b4b4" stroke-width="1" fill="none"/><path d="M73.0 0V165.6M146.0 0V165.6M219.0 0V165.6M292.0 0V165.6M365.0 0V165.6M437.9 0V165.6M510.9 0V165.6M583.9 0V165.6M656.9 0V165.6" stroke="#cdcdcd" stroke-width="1.5" fill="none"/><rect x="72.7" y="0" width="21" height="165.6" fill="#525252"/><rect x="166.7" y="0" width="11" height="165.6" fill="#525252"/><rect x="553.7" y="0" width="11" height="165.6" fill="#525252"/><rect x="636.7" y="0" width="21.5" height="165.6" fill="#525252"/><rect x="-0.3" y="114.3" width="73" height="51.3" fill="#0b4866" opacity=".5"/><path d="M-0.3 11.3H72.7" stroke="#7fd8c0" stroke-width="1"/><path d="M-0.3 17.05H72.7" stroke="#d8a8a8" stroke-width="1" opacity=".8"/><path d="M0.3 165.6V114.3H72.1V165.6" fill="none" stroke="#38b4e8" stroke-width="1.3"/><rect x="0.3" y="97.8" width="71.8" height="16" fill="#000" stroke="#38b4e8" stroke-width="1"/><rect x="93.7" y="97.3" width="73" height="68.3" fill="#0b4866" opacity=".5"/><path d="M93.7 11.3H166.7" stroke="#7fd8c0" stroke-width="1"/><path d="M93.7 17.05H166.7" stroke="#d8a8a8" stroke-width="1" opacity=".8"/><path d="M94.3 165.6V97.3H166.1V165.6" fill="none" stroke="#38b4e8" stroke-width="1.3"/><rect x="94.3" y="97.8" width="71.8" height="16" fill="#0b4866" stroke="#38b4e8" stroke-width="1"/><rect x="564.7" y="97.3" width="72" height="68.3" fill="#0b4866" opacity=".5"/><path d="M564.7 11.3H636.7" stroke="#7fd8c0" stroke-width="1"/><path d="M564.7 17.05H636.7" stroke="#d8a8a8" stroke-width="1" opacity=".8"/><path d="M565.3 165.6V97.3H636.1V165.6" fill="none" stroke="#38b4e8" stroke-width="1.3"/><rect x="565.3" y="97.8" width="70.8" height="16" fill="#0b4866" stroke="#38b4e8" stroke-width="1"/><rect x="658.2" y="114.3" width="71.5" height="51.3" fill="#0b4866" opacity=".5"/><path d="M658.2 11.3H729.7" stroke="#7fd8c0" stroke-width="1"/><path d="M658.2 17.05H729.7" stroke="#d8a8a8" stroke-width="1" opacity=".8"/><path d="M658.8 165.6V114.3H729.1V165.6" fill="none" stroke="#38b4e8" stroke-width="1.3"/><rect x="658.8" y="97.8" width="70.3" height="16" fill="#000" stroke="#38b4e8" stroke-width="1"/><polyline points="-0.3,143.0 1.9,143.0 4.1,143.3 6.3,142.6 8.5,143.0 10.7,142.6 12.7,143.0 14.7,142.3 16.7,142.4 18.7,141.8 20.7,142.2 22.7,142.0 24.7,141.8 26.7,141.2 28.7,140.9 30.7,141.1 32.7,140.9 34.7,140.8 36.7,140.8 38.7,140.6 40.7,140.0 42.7,140.1 44.7,139.8 46.7,139.0 48.7,139.0 50.7,138.5 52.7,138.8 54.7,138.5 56.7,137.7 58.7,137.4 60.7,137.7 62.7,136.9 64.7,136.8 66.7,136.7 68.7,136.3 70.7,136.3 72.7,136.1 74.8,135.8 76.9,135.3 79.0,134.8 81.1,134.4 83.2,134.1 85.3,133.4 87.4,133.0 89.5,133.3 91.6,132.5 93.7,132.6 95.8,132.1 97.8,131.3 99.9,131.0 101.9,130.6 104.0,129.8 106.0,129.3 108.1,128.9 110.1,128.8 112.2,128.1 114.3,128.2 116.3,127.6 118.4,126.6 120.4,126.3 122.5,126.2 124.5,125.3 126.6,124.9 128.6,124.4 130.7,124.5 132.7,124.0 134.7,123.2 136.7,123.3 138.7,122.5 140.7,122.1 142.7,121.8 144.7,121.3 146.7,120.8 148.7,120.1 150.7,119.6 152.7,119.1 154.7,118.5 156.7,118.7 158.7,118.2 160.7,117.6 162.7,116.7 164.7,116.7 166.7,116.2 168.9,115.6 171.1,115.0 173.3,115.0 175.5,114.4 177.7,113.8 180.0,112.8 182.4,111.7 184.7,110.7 187.2,109.1 189.7,106.5 192.7,99.5 194.2,81.6 195.7,64.5 197.2,61.3 197.2,61.3 204.8,61.3 204.8,61.3 211.6,61.3 211.6,61.3 220.4,61.3 220.4,61.7 226.8,61.7 226.8,60.9 233.9,60.9 233.9,61.3 238.4,61.3 238.4,60.9 245.2,60.9 245.2,61.7 252.6,61.7 252.6,61.3 257.2,61.3 257.2,61.3 263.7,61.3 263.7,61.3 268.6,61.3 268.6,61.3 274.3,61.3 274.3,61.3 281.0,61.3 281.0,61.3 285.8,61.3 285.8,60.9 290.3,60.9 290.3,62.1 299.1,62.1 299.1,60.9 307.7,60.9 307.7,61.3 315.1,61.3 315.1,62.1 318.3,62.1 318.3,61.3 323.0,61.3 323.0,62.1 328.6,62.1 328.6,60.9 333.8,60.9 333.8,61.3 337.6,61.3 337.6,61.3 344.2,61.3 344.2,61.3 347.4,61.3 347.4,61.3 353.8,61.3 353.8,61.3 357.4,61.3 357.4,61.3 363.6,61.3 363.6,61.7 370.1,61.7 370.1,60.9 373.9,60.9 373.9,61.3 380.7,61.3 380.7,61.7 384.6,61.7 384.6,61.3 393.2,61.3 393.2,61.3 400.5,61.3 400.5,61.7 404.1,61.7 404.1,62.1 407.9,62.1 407.9,62.1 415.6,62.1 415.6,61.7 423.5,61.7 423.5,61.3 426.8,61.3 426.8,60.9 435.2,60.9 435.2,60.9 442.1,60.9 442.1,61.7 448.7,61.7 448.7,60.9 456.1,60.9 456.1,61.3 460.1,61.3 460.1,61.3 463.3,61.3 463.3,60.9 466.5,60.9 466.5,61.3 470.9,61.3 470.9,61.3 479.4,61.3 479.4,61.3 482.5,61.3 482.5,60.9 489.4,60.9 489.4,61.3 493.2,61.3 493.2,61.3 499.4,61.3 499.4,62.1 505.4,62.1 505.4,62.1 510.9,62.1 510.9,60.9 514.9,60.9 514.9,61.3 518.3,61.3 518.3,62.1 521.6,62.1 521.6,62.1 529.3,62.1 529.3,62.1 534.2,62.1 534.2,61.4 535.7,75.3 537.2,97.1 539.7,105.5 542.2,108.3 544.7,110.4 547.0,111.7 549.2,112.2 551.5,113.4 553.7,113.9 555.9,115.0 558.1,115.7 560.3,116.4 562.5,116.8 564.7,117.1 566.7,117.6 568.7,118.1 570.7,118.3 572.7,119.1 574.7,118.8 576.7,119.5 578.7,119.7 580.7,120.6 582.7,121.1 584.7,121.6 586.7,121.7 588.7,122.4 590.7,122.4 592.7,122.8 594.7,122.8 596.7,123.8 598.7,124.3 600.7,124.1 602.7,124.4 604.7,125.5 606.7,125.7 608.7,125.8 610.7,126.7 612.7,126.7 614.7,126.7 616.7,127.3 618.7,127.4 620.7,128.6 622.7,128.9 624.7,129.2 626.7,129.3 628.7,129.9 630.7,130.0 632.7,130.3 634.7,130.8 636.7,131.3 638.9,131.5 641.0,132.6 643.2,132.8 645.3,133.5 647.5,133.2 649.6,134.1 651.8,134.6 653.9,135.0 656.1,134.9 658.2,135.9 660.2,136.1 662.3,136.8 664.3,136.7 666.4,137.1 668.4,137.2 670.5,137.7 672.5,138.2 674.6,138.1 676.6,138.4 678.7,138.8 680.7,139.4 682.7,139.7 684.7,139.8 686.7,139.8 688.7,140.5 690.7,140.8 692.7,140.8 694.7,141.1 696.7,141.6 698.7,141.6 700.7,141.7 702.7,141.7 704.7,141.9 706.7,142.7 708.7,142.3 710.7,143.2 712.8,143.4 714.9,142.8 717.0,143.4 719.1,143.2 721.3,143.3 723.4,143.5 725.5,143.8 727.6,144.0 729.7,144.3" fill="none" stroke="#e9e94a" stroke-width="1.1"/><rect x="9.2" y="10.8" width="83.5" height="24" fill="#1c1c1c"/><rect x="10.7" y="144.3" width="7" height="11" fill="#06222e"/><rect x="364.2" y="150.3" width="1" height="14" fill="#c4c4c4"/></svg>
<span class="t" style="left:990.4px;top:546px;font-size:11px;line-height:14px;letter-spacing:0.079px;color:#fff;">MR: -36.87 dBm</span>
<span class="t" style="left:990.4px;top:557.3px;font-size:11px;line-height:14px;letter-spacing:0.069px;color:#fff;">805.731 MHz</span>
<span class="t" style="left:1332.4px;top:571.5px;font-size:11px;line-height:14px;letter-spacing:0.545px;color:#fff;">MR</span>
<svg class="a" style="left:1331.5px;top:585px" width="15" height="15" viewBox="0 0 15 15"><path d="M7.5 1 L14 7.5 L7.5 14 L1 7.5 Z" fill="#fff" stroke="#000" stroke-width=".8"/></svg>
<span class="t" style="left:1006.4px;top:601.5px;font-size:13.5px;line-height:18px;letter-spacing:0.342px;color:#fff;">BL</span>
<span class="t" style="left:1100.4px;top:601.5px;font-size:13.5px;line-height:18px;letter-spacing:0.592px;color:#fff;">AL</span>
<span class="t" style="left:1568.4px;top:601.5px;font-size:13.5px;line-height:18px;letter-spacing:0.217px;color:#fff;">AU</span>
<span class="t" style="left:1662.4px;top:601.5px;font-size:13.5px;line-height:18px;letter-spacing:0.217px;color:#fff;">BU</span>
<span class="t" style="left:980.4px;top:618.5px;font-size:13.5px;line-height:18px;letter-spacing:-0.160px;color:#a8e6a0;">-68.87 dBm</span>
<span class="t" style="left:1073.9px;top:618.5px;font-size:13.5px;line-height:18px;letter-spacing:-0.110px;color:#a8e6a0;">-58.50 dBm</span>
<span class="t" style="left:1544.9px;top:618.5px;font-size:13.5px;line-height:18px;letter-spacing:-0.210px;color:#a8e6a0;">-59.16 dBm</span>
<span class="t" style="left:1637.9px;top:618.5px;font-size:13.5px;line-height:18px;letter-spacing:-0.160px;color:#a8e6a0;">-69.08 dBm</span>
<span class="t" style="left:985.4px;top:634.5px;font-size:13.5px;line-height:18px;letter-spacing:-0.205px;color:#e4f2f6;">-54.36 dB</span>
<span class="t" style="left:1078.9px;top:634.5px;font-size:13.5px;line-height:18px;letter-spacing:-0.094px;color:#8ecbe8;">-43.99 dB</span>
<span class="t" style="left:1549.4px;top:634.5px;font-size:13.5px;line-height:18px;letter-spacing:-0.205px;color:#8ecbe8;">-44.65 dB</span>
<span class="t" style="left:1642.4px;top:634.5px;font-size:13.5px;line-height:18px;letter-spacing:-0.150px;color:#e4f2f6;">-54.57 dB</span>
<span class="t" style="left:990.2px;top:680px;font-size:12px;line-height:16px;color:#e6e620;font-weight:700;">*</span>
<span class="t" style="left:1319.4px;top:685.5px;font-size:13.5px;line-height:18px;letter-spacing:0.140px;color:#9fd89f;">abs</span>
<span class="t" style="left:1345.9px;top:685.5px;font-size:13.5px;line-height:18px;letter-spacing:-0.105px;color:#fff;">rel</span>
<div class="btn" style="left:885px;top:702.5px;width:79.5px;height:21.5px;"></div>
<span class="t" style="left:897.4px;top:705.55px;font-size:12.5px;line-height:16px;letter-spacing:-0.190px;">Autoscale</span>
<div class="knob" style="left:975.8px;top:712px"></div>
<span class="t" style="left:988.9px;top:707px;font-size:12.5px;line-height:16px;letter-spacing:-0.201px;transform:scaleX(0.906);transform-origin:0 50%;">CF:</span>
<span class="t" style="left:1012.4px;top:707px;font-size:12.5px;line-height:16px;letter-spacing:-0.121px;">806.00 MHz</span>
<div class="knob" style="left:1579.8px;top:712px"></div>
<span class="t" style="left:1592.9px;top:707px;font-size:12.5px;line-height:16px;letter-spacing:-0.094px;">Span:</span>
<span class="t" style="left:1630.4px;top:707px;font-size:12.5px;line-height:16px;letter-spacing:-0.139px;">38.84 MHz</span>
<div class="a" style="left:878.5px;top:729px;width:844.5px;height:6.8px;background:#9b9b9b"></div>
<span class="t" style="left:886.4px;top:747.5px;font-size:12.5px;line-height:16px;letter-spacing:0.232px;">Ref Total Power:</span>
<span class="t" style="left:886.4px;top:776px;font-size:12.5px;line-height:16px;letter-spacing:0.108px;">-14.51 dBm</span>
<div class="a" style="left:988px;top:736px;width:652.5px;height:104.5px;background:#ababab;border:1px solid #000;border-top-width:1.5px;border-left-width:1.5px"></div>
<div class="a" style="left:989.5px;top:737.5px;width:609px;height:21.5px;background:linear-gradient(#fff,#fbfbfc 50%,#f1f2f4)"></div>
<div class="a" style="left:989.5px;top:759px;width:609px;height:43.5px;background:#fff"></div>
<div class="a" style="left:989.5px;top:759.5px;width:75px;height:21.5px;background:#adc0de"></div>
<div class="a" style="left:1339px;top:759.5px;width:85px;height:21.5px;background:#b9221f"></div>
<svg class="a" style="left:989.5px;top:737.5px" width="610" height="71" viewBox="0 0 610 71"><path d="M75.5 2V20M169 2V20M259 2V20M349.5 2V20M435 2V20M524.5 2V20M609.5 2V20" stroke="#dfe2e7" stroke-width="1"/><path d="M75.5 22V70M169 22V70M259 22V70M349.5 22V70M435 22V70M524.5 22V70M609.5 22V70M0 21.5H609M0 43.5H609M0 65.5H609" stroke="#a0a0a0" stroke-width="1"/></svg>
<span class="t" style="left:997.4px;top:741px;font-size:12.5px;line-height:16px;letter-spacing:-0.197px;color:#222;">Channel</span>
<span class="t" style="left:1071.4px;top:741px;font-size:12.5px;line-height:16px;letter-spacing:0.082px;color:#222;">Freq Offset</span>
<span class="t" style="left:1165.4px;top:741px;font-size:12.5px;line-height:16px;letter-spacing:-0.019px;color:#222;">Bandwidth</span>
<span class="t" style="left:1255.4px;top:741px;font-size:12.5px;line-height:16px;letter-spacing:0.092px;color:#222;">Lower Abs</span>
<span class="t" style="left:1345.4px;top:741px;font-size:12.5px;line-height:16px;letter-spacing:-0.065px;color:#222;">Lower Rel</span>
<span class="t" style="left:1431.4px;top:741px;font-size:12.5px;line-height:16px;letter-spacing:-0.019px;color:#222;">Upper Abs</span>
<span class="t" style="left:1520.4px;top:741px;font-size:12.5px;line-height:16px;letter-spacing:-0.120px;color:#222;">Upper Rel</span>
<span class="t" style="left:993.4px;top:763px;font-size:12.5px;line-height:16px;letter-spacing:-0.560px;">AL&amp;AU</span>
<span class="t" style="left:1067.4px;top:763px;font-size:12.5px;line-height:16px;letter-spacing:-0.139px;">12.50 MHz</span>
<span class="t" style="left:1161.4px;top:763px;font-size:12.5px;line-height:16px;letter-spacing:-0.162px;">3.84 MHz</span>
<span class="t" style="left:1251.4px;top:763px;font-size:12.5px;line-height:16px;letter-spacing:0.158px;">-58.50 dBm</span>
<span class="t" style="left:1341.4px;top:763px;font-size:12.5px;line-height:16px;letter-spacing:0.109px;color:#fff;">-43.99 dB</span>
<span class="t" style="left:1427.4px;top:763px;font-size:12.5px;line-height:16px;letter-spacing:0.108px;">-59.16 dBm</span>
<span class="t" style="left:1516.4px;top:763px;font-size:12.5px;line-height:16px;letter-spacing:0.109px;">-44.65 dB</span>
<span class="t" style="left:993.4px;top:784.8px;font-size:12.5px;line-height:16px;letter-spacing:-0.560px;">BL&amp;BU</span>
<span class="t" style="left:1067.4px;top:784.8px;font-size:12.5px;line-height:16px;letter-spacing:-0.139px;">17.50 MHz</span>
<span class="t" style="left:1161.4px;top:784.8px;font-size:12.5px;line-height:16px;letter-spacing:-0.162px;">3.84 MHz</span>
<span class="t" style="left:1251.4px;top:784.8px;font-size:12.5px;line-height:16px;letter-spacing:0.158px;">-68.87 dBm</span>
<span class="t" style="left:1341.4px;top:784.8px;font-size:12.5px;line-height:16px;letter-spacing:0.109px;">-54.36 dB</span>
<span class="t" style="left:1427.4px;top:784.8px;font-size:12.5px;line-height:16px;letter-spacing:0.108px;">-69.08 dBm</span>
<span class="t" style="left:1516.4px;top:784.8px;font-size:12.5px;line-height:16px;letter-spacing:0.109px;">-54.57 dB</span>
<div class="btn" style="left:1646px;top:743px;width:73px;height:28px;"></div>
<span class="t" style="left:1661.4px;top:749.3px;font-size:12.5px;line-height:16px;letter-spacing:-0.201px;">Expand</span>
<div class="a" style="left:8px;top:849.5px;width:1725px;height:29px;background:#f0f0f0"></div>
<div class="a" style="left:8px;top:878.3px;width:1725px;height:1.2px;background:#6e6e6e"></div><div class="a" style="left:8px;top:879.5px;width:1725px;height:1px;background:#fff"></div>
<div class="a" style="left:8px;top:906px;width:1725px;height:1.2px;background:#7a7a7a"></div><div class="a" style="left:8px;top:907.2px;width:1725px;height:1px;background:#fff"></div>
<span class="t" style="left:12.4px;top:857px;font-size:12.5px;line-height:16px;letter-spacing:-0.422px;">Markers</span>
<div class="btn" style="left:131px;top:854px;width:41px;height:19.5px;border-color:#3a3a3a;"></div>
<span class="t" style="left:133.9px;top:856.05px;font-size:12.5px;line-height:16px;letter-spacing:-0.240px;">Define</span>
<svg class="a" style="left:386px;top:860px" width="12" height="6.5" viewBox="0 0 12 6.5"><path d="M.5 .5H11.5L6 6z" fill="#9a9aa0" stroke="#6a6a72" stroke-width=".7"/></svg>
<span class="t" style="left:435.9px;top:857px;font-size:12.5px;line-height:16px;letter-spacing:-0.292px;transform:scaleX(0.885);transform-origin:0 50%;">MR</span>
<div class="btn" style="left:664px;top:854px;width:87.5px;height:20px;"></div>
<span class="t" style="left:667.4px;top:856.3px;font-size:12.5px;line-height:16px;letter-spacing:-0.096px;">Frequency</span>
<svg class="a" style="left:740px;top:862px" width="7" height="4" viewBox="0 0 7 4"><path d="M0 0h7L3.5 4z" fill="#000"/></svg>
<div class="fld" style="left:760px;top:853.5px;width:95.5px;height:20px"></div>
<span class="t" style="left:762.9px;top:856px;font-size:12.5px;line-height:16px;letter-spacing:-0.151px;">805.731 MHz</span>
<div class="btn" style="left:1037.5px;top:854px;width:68.5px;height:20px;"></div>
<span class="t" style="left:1043.9px;top:856.3px;font-size:12.5px;line-height:16px;letter-spacing:0.166px;">To Center</span>
<div class="btn" style="left:1114px;top:854px;width:45px;height:20px;"></div>
<span class="t" style="left:1122.4px;top:856.3px;font-size:12.5px;line-height:16px;letter-spacing:-0.325px;">Peak</span>
<div class="btn" style="left:1167px;top:854px;width:21px;height:20px;"></div>
<svg class="a" style="left:1171.5px;top:857.2px" width="12" height="11" viewBox="0 0 12 11"><g transform="rotate(0 6 5.5)"><path d="M1.2 5.5 L5.8 1.2 V3.8 H10.2 V7.2 H5.8 V9.8Z" fill="#00005c"/></g></svg>
<div class="btn" style="left:1196px;top:854px;width:20px;height:20px;"></div>
<svg class="a" style="left:1200px;top:857.2px" width="12" height="11" viewBox="0 0 12 11"><g transform="rotate(180 6 5.5)"><path d="M1.2 5.5 L5.8 1.2 V3.8 H10.2 V7.2 H5.8 V9.8Z" fill="#00005c"/></g></svg>
<div class="btn" style="left:1224px;top:854px;width:22px;height:20px;"></div>
<svg class="a" style="left:1229px;top:857.2px" width="12" height="11" viewBox="0 0 12 11"><g transform="rotate(270 6 5.5)"><path d="M1.2 5.5 L5.8 1.2 V3.8 H10.2 V7.2 H5.8 V9.8Z" fill="#00005c"/></g></svg>
<div class="btn" style="left:1254.5px;top:854px;width:22.5px;height:20px;"></div>
<svg class="a" style="left:1259.75px;top:857.2px" width="12" height="11" viewBox="0 0 12 11"><g transform="rotate(90 6 5.5)"><path d="M1.2 5.5 L5.8 1.2 V3.8 H10.2 V7.2 H5.8 V9.8Z" fill="#00005c"/></g></svg>
<div class="btn" style="left:1459px;top:854px;width:51px;height:20px;"></div>
<span class="t" style="left:1469.9px;top:856.3px;font-size:12.5px;line-height:16px;letter-spacing:-0.038px;">Table</span>
<div class="btn" style="left:1702px;top:854px;width:25px;height:20px;"></div>
<span class="t" style="left:1710.4px;top:856.3px;font-size:12.5px;line-height:16px;">X</span>
<span class="t" style="left:13.4px;top:885px;font-size:12.5px;line-height:16px;letter-spacing:-0.491px;">LTE ACLR</span>
<span class="t" style="left:149.4px;top:885.5px;font-size:12.5px;line-height:16px;letter-spacing:-0.096px;">Frequency</span>
<div class="fld" style="left:217px;top:883px;width:91px;height:20.5px"></div>
<span class="t" style="left:219.4px;top:885px;font-size:12.5px;line-height:16px;letter-spacing:-0.121px;">806.00 MHz</span>
<span class="t" style="left:518.4px;top:885.5px;font-size:12.5px;line-height:16px;letter-spacing:-0.128px;">Ref Lev</span>
<div class="fld" style="left:568.5px;top:883px;width:93.5px;height:20.5px"></div>
<span class="t" style="left:572.4px;top:885px;font-size:12.5px;line-height:16px;letter-spacing:0.148px;">0.00 dBm</span>
<span class="t" style="left:874.4px;top:885.5px;font-size:12.5px;line-height:16px;letter-spacing:-0.441px;">Res BW</span>
<div class="fld" style="left:927px;top:883px;width:91px;height:20.5px"></div>
<span class="t" style="left:929.4px;top:885px;font-size:12.5px;line-height:16px;letter-spacing:0.047px;">100.000 kHz</span>
<div class="btn" style="left:1591px;top:882px;width:54px;height:21px;"></div>
<span class="t" style="left:1596.4px;top:884.8px;font-size:12.5px;line-height:16px;letter-spacing:-0.351px;">Markers</span>
<div class="btn" style="left:1649px;top:882px;width:50px;height:21px;"></div>
<span class="t" style="left:1655.4px;top:884.8px;font-size:12.5px;line-height:16px;letter-spacing:-0.258px;">Traces</span>
<div class="btn" style="left:1704px;top:882px;width:26px;height:21.5px;"></div>
<svg class="a" style="left:1709px;top:885px" width="16" height="16" viewBox="0 0 16 16"><g transform="translate(8 8)"><rect x="-1.7" y="-7.9" width="3.4" height="3.6" rx="1" transform="rotate(0)" fill="#4a68b8" stroke="#2a3f8a" stroke-width=".5"/><rect x="-1.7" y="-7.9" width="3.4" height="3.6" rx="1" transform="rotate(45)" fill="#4a68b8" stroke="#2a3f8a" stroke-width=".5"/><rect x="-1.7" y="-7.9" width="3.4" height="3.6" rx="1" transform="rotate(90)" fill="#4a68b8" stroke="#2a3f8a" stroke-width=".5"/><rect x="-1.7" y="-7.9" width="3.4" height="3.6" rx="1" transform="rotate(135)" fill="#4a68b8" stroke="#2a3f8a" stroke-width=".5"/><rect x="-1.7" y="-7.9" width="3.4" height="3.6" rx="1" transform="rotate(180)" fill="#4a68b8" stroke="#2a3f8a" stroke-width=".5"/><rect x="-1.7" y="-7.9" width="3.4" height="3.6" rx="1" transform="rotate(225)" fill="#4a68b8" stroke="#2a3f8a" stroke-width=".5"/><rect x="-1.7" y="-7.9" width="3.4" height="3.6" rx="1" transform="rotate(270)" fill="#4a68b8" stroke="#2a3f8a" stroke-width=".5"/><rect x="-1.7" y="-7.9" width="3.4" height="3.6" rx="1" transform="rotate(315)" fill="#4a68b8" stroke="#2a3f8a" stroke-width=".5"/><circle r="5.4" fill="#4a68b8" stroke="#2a3f8a" stroke-width=".6"/><circle r="3.2" fill="#cfdcf8" stroke="#2a3f8a" stroke-width=".8"/></g></svg>
<span class="t" style="left:8.9px;top:912px;font-size:12.5px;line-height:16px;letter-spacing:0.089px;">Stopped</span>
<span class="t" style="left:121.4px;top:912px;font-size:12.5px;line-height:16px;letter-spacing:-0.045px;">Recovery done on PSS/SSS on the center 62 carr</span>
<div class="a" style="left:116px;top:910px;width:1px;height:17px;background:#d4d4d4;box-shadow:1px 0 0 #fff"></div>
<div class="a" style="left:462px;top:910px;width:1px;height:17px;background:#d4d4d4;box-shadow:1px 0 0 #fff"></div>
<div class="a" style="left:557px;top:910px;width:1px;height:17px;background:#d4d4d4;box-shadow:1px 0 0 #fff"></div>
<div class="a" style="left:611px;top:910px;width:1px;height:17px;background:#d4d4d4;box-shadow:1px 0 0 #fff"></div>
<span class="t" style="left:1613.4px;top:909.5px;font-size:12.5px;line-height:16px;letter-spacing:0.073px;">No Connection:</span>
<div class="a" style="left:1706px;top:911px;width:15px;height:13.5px;background:#f40000;border:1px solid #b00000"></div>
</body></html>
